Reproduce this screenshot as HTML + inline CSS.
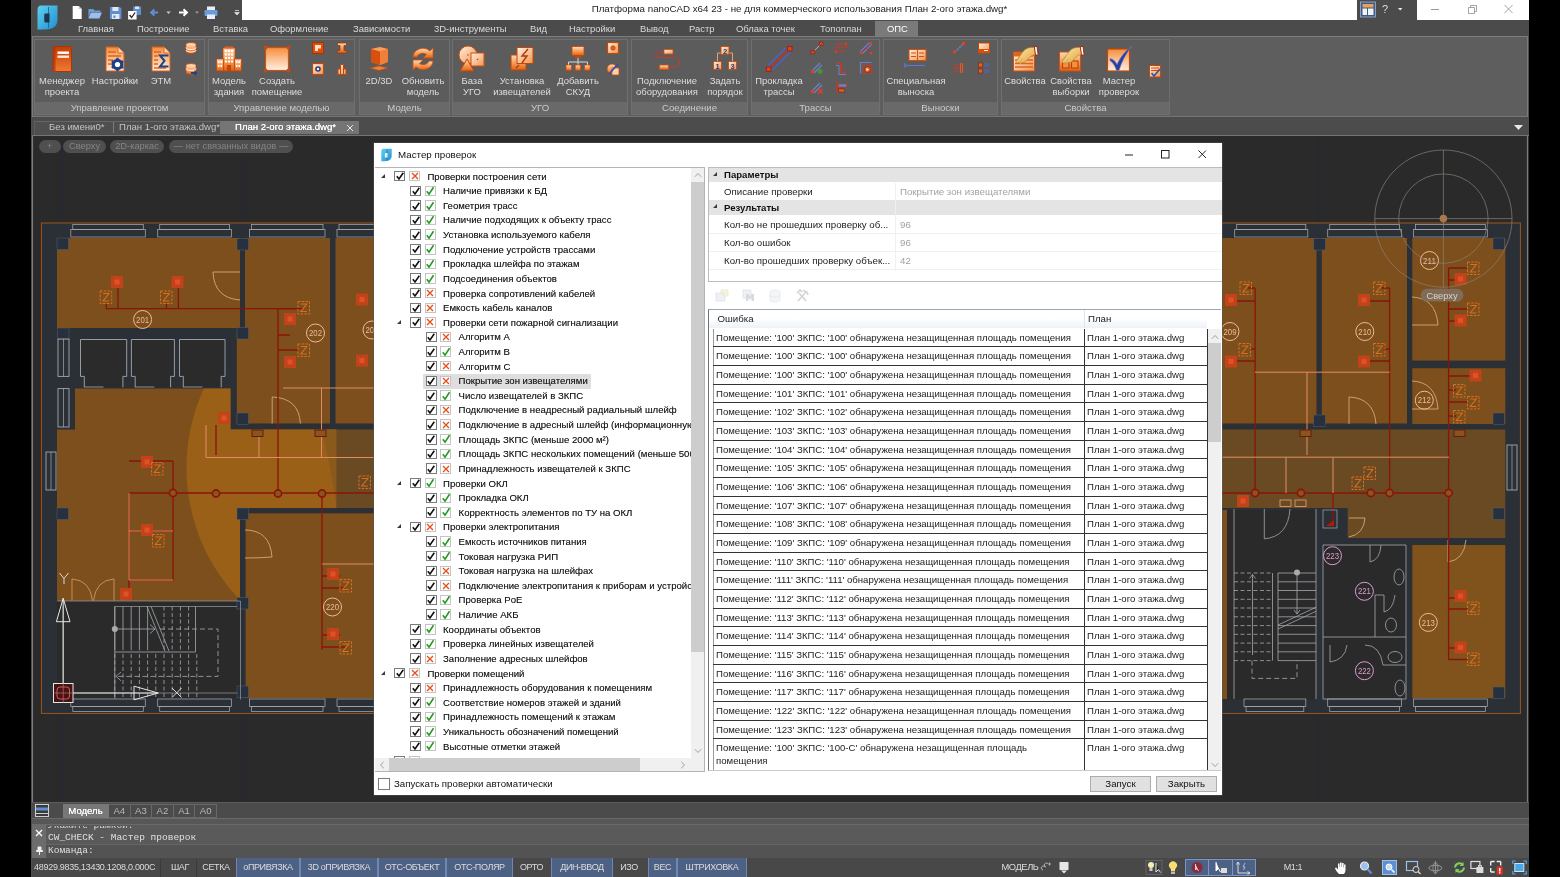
<!DOCTYPE html>
<html lang="ru"><head><meta charset="utf-8"><title>Платформа nanoCAD</title>
<style>
*{box-sizing:border-box;margin:0;padding:0}
html,body{width:1560px;height:877px;overflow:hidden;background:#000}
body{font-family:"Liberation Sans",sans-serif;font-size:9.7px;color:#222;position:relative}
.abs{position:absolute}
#app{will-change:transform;position:absolute;left:32px;top:0;width:1497px;height:877px;background:#4b4b4b;overflow:hidden;box-shadow:-1px 0 0 #505050}
.t{position:absolute;white-space:nowrap;line-height:12px}
/* title */
#titlew{position:absolute;left:210px;top:0;width:1115px;height:19.5px;background:#fff}
#titlew2{position:absolute;left:1385px;top:0;width:112px;height:19.5px;background:#fff}
#title{position:absolute;left:0;width:100%;top:2.6px;text-align:center;font-size:9.75px;color:#222;line-height:12px}
/* menu */
.mt{position:absolute;top:23.3px;font-size:9.45px;color:#dadada;line-height:12px;white-space:nowrap;}
#opstab{position:absolute;left:843px;top:21px;width:43px;height:17px;background:#7a7a7a}
/* ribbon */
#ribbon{position:absolute;left:0;top:36px;width:1496px;height:81px;background:#5e5e5e;border:1.5px solid #7c7c7c;border-bottom:1.5px solid #767676}
.grp{position:absolute;top:39px;height:76px;border:1px solid #6f6f6f;background:#5c5c5c}
.grp .gt{position:absolute;left:0;right:0;bottom:0;height:12.5px;background:#696969;color:#cacaca;text-align:center;font-size:9.6px;line-height:12px}
.bl{position:absolute;top:74.5px;transform:translateX(-50%);text-align:center;color:#dedede;font-size:9.45px;line-height:11px;white-space:nowrap}
.ic{position:absolute}
/* doc tabs */
#doctabs{position:absolute;left:0;top:119px;width:1497px;height:17px;background:#4c4c4c}
.dt{position:absolute;top:2px;height:13px;font-size:9.6px;line-height:12px;color:#c4c4c4;white-space:nowrap}
/* drawing */
#draw{position:absolute;left:0;top:136px;width:1497px;height:666px;background:#2a2a2a;overflow:hidden}
.pill{position:absolute;top:4px;height:13px;border-radius:6.5px;background:#4f4f4f;color:#858585;font-size:9.3px;line-height:13px;text-align:center;white-space:nowrap}
/* bottom */
#laytabs{position:absolute;left:0;top:802px;width:1497px;height:17px;background:#4b4b4b;border-top:1px solid #5c5c5c;border-bottom:1.5px solid #6a6a6a}
.lt{position:absolute;top:0.5px;height:14.5px;border:1px solid #686868;border-left:none;color:#b8b8b8;font-size:9.6px;line-height:12.5px;text-align:center}
#cmd{position:absolute;left:0;top:819px;width:1497px;height:39px;background:#575757}
.mono{font-family:"Liberation Mono",monospace}
#status{position:absolute;left:0;top:858px;width:1497px;height:19px;background:#484848}
.sb{position:absolute;top:0;height:19px;font-size:9px;line-height:19.5px;color:#dcdcdc;text-align:center;white-space:nowrap;letter-spacing:-.38px}
.sb.on{background:#4d6185;border:1px solid #6f86b0;border-top:none;border-bottom:none;line-height:19px}
/* dialog */
#dlg{position:absolute;left:342px;top:143px;width:848px;height:652px;background:#fff;box-shadow:0 0 0 .5px #555}
.row{position:absolute;height:14.6px;white-space:nowrap;font-size:9.6px;line-height:14.6px;color:#161616;text-shadow:0 0 .3px rgba(0,0,0,.45)}
.cb{position:absolute;width:11px;height:10.5px;border:1px solid #7a7a7a;background:#fff;top:1.4px}
.rs{position:absolute;width:11px;height:10.5px;border:1px solid #c4c4c4;background:#fff;top:1.4px}
.cb svg,.rs svg{position:absolute;left:-.5px;top:-.7px;width:10px;height:10px}
.tri{position:absolute;width:0;height:0;border-left:4.5px solid transparent;border-bottom:4.5px solid #3a3a3a;top:4px}
</style></head><body>
<svg width="0" height="0" style="position:absolute"><defs>
<linearGradient id="go" x1="0" y1="0" x2="0" y2="1"><stop offset="0" stop-color="#ffd9b8"/><stop offset=".55" stop-color="#f59a55"/><stop offset="1" stop-color="#e25f14"/></linearGradient>
<linearGradient id="gr" x1="0" y1="0" x2="0" y2="1"><stop offset="0" stop-color="#c23c08"/><stop offset="1" stop-color="#f07a30"/></linearGradient>
<linearGradient id="gpg" x1="0" y1="0" x2="0" y2="1"><stop offset="0" stop-color="#f58c3c"/><stop offset=".5" stop-color="#fbc090"/><stop offset="1" stop-color="#fff0e4"/></linearGradient>
<linearGradient id="gp" x1="0" y1="0" x2="1" y2="1"><stop offset="0" stop-color="#fff0e0"/><stop offset="1" stop-color="#f49450"/></linearGradient>
<linearGradient id="gh" x1="0" y1="0" x2="1" y2="1"><stop offset="0" stop-color="#ffe9a8"/><stop offset="1" stop-color="#e0a040"/></linearGradient>
<symbol id="i-book" viewBox="0 0 30 30"><rect x="6" y="2.500" width="18.500" height="25" rx="1.200" fill="url(#gr)" stroke="#a83408" stroke-width="1"/><rect x="6" y="2.500" width="2.500" height="25" fill="#b63606" opacity=".8"/><rect x="10.500" y="7.500" width="11.500" height="2.400" fill="#fff"/><rect x="10.500" y="11.500" width="11.500" height="2.400" fill="#ffe6d6"/></symbol>
<symbol id="i-docgear" viewBox="0 0 30 30"><path d="M6 3h12l6 6v18H6z" fill="url(#gpg)" stroke="#d55a14" stroke-width="1"/><path d="M18 3v6h6" fill="#ffd0a8" stroke="#d55a14" stroke-width=".8"/><path d="M8 8h8M8 12h13M8 16h5M8 20h4" stroke="#e0641c" stroke-width="1.600"/><circle cx="17.500" cy="20.500" r="5.800" fill="#1f3f86"/><circle cx="17.500" cy="20.500" r="2.600" fill="#fff"/><path d="M17.500 13.800v13.400M11.700 17.200l11.600 6.600M11.700 23.800l11.600-6.600" stroke="#1f3f86" stroke-width="2.200"/><circle cx="17.500" cy="20.500" r="2.600" fill="#fff"/></symbol>
<symbol id="i-docsum" viewBox="0 0 30 30"><path d="M6 3h12l6 6v18H6z" fill="url(#gpg)" stroke="#d55a14" stroke-width="1"/><path d="M18 3v6h6" fill="#ffd0a8" stroke="#d55a14" stroke-width=".8"/><path d="M8 8h7M8 12h4M8 16h4M8 20h4M8 24h12" stroke="#e0641c" stroke-width="1.600"/><path d="M22.500 11.500h-8.500l4.500 5.300-4.500 5.700h8.500" fill="none" stroke="#1f3f86" stroke-width="2"/></symbol>
<symbol id="i-bld" viewBox="0 0 30 30"><rect x="9" y="4" width="12" height="23" fill="url(#go)" stroke="#c04808" stroke-width=".8"/><rect x="2.500" y="15" width="7" height="12" fill="url(#go)" stroke="#c04808" stroke-width=".8"/><rect x="20.500" y="15" width="7" height="12" fill="url(#go)" stroke="#c04808" stroke-width=".8"/><path d="M11 7h8M11 10.500h8M11 14h8M11 17.500h8" stroke="#fff" stroke-width="1.800" stroke-dasharray="2 1"/><path d="M4 18h4M4 22h4M22 18h4M22 22h4" stroke="#fff" stroke-width="1.800" stroke-dasharray="1.500 1"/><rect x="13" y="21" width="4" height="6" fill="#c04808"/><rect x="10.500" y="2.500" width="9" height="2" fill="#e0641c"/></symbol>
<symbol id="i-room" viewBox="0 0 30 30"><rect x="3.500" y="3.500" width="23" height="23" fill="url(#gpg)" stroke="#d0500c" stroke-width="1.200"/><circle cx="3.500" cy="3.500" r="2" fill="#c84810"/><circle cx="26.500" cy="3.500" r="2" fill="#c84810"/><circle cx="3.500" cy="26.500" r="2" fill="#c84810"/><circle cx="26.500" cy="26.500" r="2" fill="#c84810"/></symbol>
<symbol id="i-cube" viewBox="0 0 30 30"><path d="M7 5l9-2 8 2v13l-8 3-9-3z" fill="url(#gr)"/><path d="M7 5l9 2.500V21l-9-3z" fill="#d8500e"/><path d="M16 7.500L24 5v13l-8 3z" fill="#f08038"/><path d="M7 5l9-2 8 2-8 2.500z" fill="#f9a060"/><path d="M6 24l9-2 9 2-9 2.500z" fill="#f08038" stroke="#c04808" stroke-width=".6"/></symbol>
<symbol id="i-refresh" viewBox="0 0 30 30"><path d="M5 13a10 9 0 0 1 17-6l3-3v10h-10l3.500-3.500a6 5.500 0 0 0-9.500 2.500z" fill="url(#go)" stroke="#c85010" stroke-width=".8"/><path d="M25 17a10 9 0 0 1-17 6l-3 3V16h10l-3.500 3.500a6 5.500 0 0 0 9.500-2.500z" fill="url(#go)" stroke="#c85010" stroke-width=".8"/></symbol>
<symbol id="i-shapes" viewBox="0 0 30 30"><circle cx="11" cy="11" r="9" fill="url(#gp)" stroke="#d0500c" stroke-width="1"/><rect x="14" y="9" width="13" height="13" fill="url(#gp)" stroke="#d0500c" stroke-width="1"/><path d="M3 27l7-12 7 12z" fill="url(#go)" stroke="#c04808" stroke-width="1"/><circle cx="11" cy="11" r=".8" fill="#c04808"/><circle cx="20.500" cy="15.500" r=".8" fill="#c04808"/></symbol>
<symbol id="i-bolt" viewBox="0 0 30 30"><rect x="4" y="11" width="15" height="15" fill="url(#go)" stroke="#c04808" stroke-width="1"/><rect x="10" y="3.500" width="16" height="16" fill="url(#gp)" stroke="#c04808" stroke-width="1"/><path d="M21 5l-6 7h5l-5 7" fill="none" stroke="#b03a04" stroke-width="1.400"/><path d="M12 21l-3 3" stroke="#b03a04" stroke-width="1.200"/></symbol>
<symbol id="i-net" viewBox="0 0 30 30"><rect x="9" y="2.500" width="12" height="9" fill="url(#go)" stroke="#c04808" stroke-width=".8"/><rect x="12" y="12" width="6" height="1.800" fill="#c84810"/><path d="M15 14v4M5.500 22v-4h19v4M15 18v4" stroke="#d8d8d8" stroke-width="1" fill="none"/><rect x="3" y="21" width="5.500" height="5.500" fill="url(#go)" stroke="#c04808" stroke-width=".7"/><rect x="12.200" y="21" width="5.500" height="5.500" fill="url(#go)" stroke="#c04808" stroke-width=".7"/><rect x="21.500" y="21" width="5.500" height="5.500" fill="url(#go)" stroke="#c04808" stroke-width=".7"/></symbol>
<symbol id="i-conn" viewBox="0 0 30 30"><path d="M12 8H6.500a2.500 2.500 0 0 0 0 5.500H23a3 3 0 0 1 0 9.500h-5" fill="none" stroke="#c43a2a" stroke-width="1.100"/><rect x="12" y="5.500" width="9" height="4.500" fill="url(#gp)" stroke="#d0500c" stroke-width=".8"/><rect x="7.500" y="21" width="9" height="4.500" fill="url(#go)" stroke="#d0500c" stroke-width=".8"/></symbol>
<symbol id="i-order" viewBox="0 0 30 30"><path d="M7.500 18v-9h15v9" fill="none" stroke="#e0a080" stroke-width="1"/><rect x="11" y="2.500" width="8" height="8" fill="url(#gp)" stroke="#c04808" stroke-width=".8"/><rect x="3.500" y="17.500" width="8" height="8" fill="url(#gp)" stroke="#c04808" stroke-width=".8"/><rect x="18.500" y="17.500" width="8" height="8" fill="url(#gp)" stroke="#c04808" stroke-width=".8"/><text x="15" y="9.500" font-size="7.500" font-weight="bold" text-anchor="middle" fill="#1f3f86" font-family="Liberation Sans,sans-serif">2</text><text x="7.500" y="24.500" font-size="7.500" font-weight="bold" text-anchor="middle" fill="#1f3f86" font-family="Liberation Sans,sans-serif">1</text><text x="22.500" y="24.500" font-size="7.500" font-weight="bold" text-anchor="middle" fill="#1f3f86" font-family="Liberation Sans,sans-serif">3</text></symbol>
<symbol id="i-trace" viewBox="0 0 30 30"><path d="M4 21.500L21.500 4M8.500 26L26 8.500" stroke="#4866c8" stroke-width="1.400"/><path d="M6 24L24 6" stroke="#c8301c" stroke-width="1.500"/><rect x="2.500" y="23" width="4.500" height="4.500" fill="#e04020" stroke="#901c08" stroke-width=".7"/><rect x="23.500" y="2.500" width="4.500" height="4.500" fill="#e04020" stroke="#901c08" stroke-width=".7"/></symbol>
<symbol id="i-callout" viewBox="0 0 30 30"><rect x="8" y="5.500" width="17" height="11" fill="url(#gp)" stroke="#d0500c" stroke-width="1"/><path d="M16.500 5.500v11M10 9h5M10 12.500h5M18 9h5M18 12.500h5" stroke="#d0500c" stroke-width="1.100"/><path d="M5 21.500h19" stroke="#5a78d0" stroke-width="1.100"/><path d="M3.500 19.500l3 2-3 2z" fill="none" stroke="#5a78d0" stroke-width=".9"/></symbol>
<symbol id="i-props" viewBox="0 0 30 30"><rect x="3.500" y="8" width="21" height="19" fill="url(#gp)" stroke="#d0500c" stroke-width="1"/><rect x="3.500" y="8" width="21" height="4.500" fill="#e0641c"/><path d="M5 16h18M5 19.500h18M5 23h18" stroke="#e0641c" stroke-width="1.300"/><path d="M24.500 3.500l1.500 7c-4 .5-6 2-8 4.500l-2.500 3c-1 1-2.500 1-3 0l-1 1c-1 1-2.600.5-2.800-.8l-.8.500c-1.200.6-2.400-.5-1.800-1.800L14 6.500c2.500-2.500 6-3.500 10.500-3z" fill="url(#gh)" stroke="#b8862c" stroke-width=".7"/><path d="M10 12.500l-3.200 4.400M12.500 14.500l-2.800 4.300M15 16.500l-2.500 2.500" stroke="#c89838" stroke-width=".7" fill="none"/><path d="M24.300 2.500h2.700l1.200 8.500h-2.700z" fill="#fff" stroke="#a82810" stroke-width="1"/></symbol>
<symbol id="i-props2" viewBox="0 0 30 30"><rect x="3.500" y="8" width="21" height="19" fill="url(#go)" stroke="#d0500c" stroke-width="1"/><rect x="6.500" y="17" width="6.500" height="7" fill="#f59040" stroke="#b84008" stroke-width="1.100"/><rect x="15.500" y="17" width="6.500" height="7" fill="#f59040" stroke="#b84008" stroke-width="1.100"/><path d="M24.500 3.500l1.500 7c-4 .5-6 2-8 4.500l-2.500 3c-1 1-2.500 1-3 0l-1 1c-1 1-2.600.5-2.800-.8l-.8.500c-1.200.6-2.400-.5-1.800-1.800L14 6.500c2.500-2.500 6-3.500 10.500-3z" fill="url(#gh)" stroke="#b8862c" stroke-width=".7"/><path d="M10 12.500l-3.200 4.400M12.500 14.500l-2.800 4.300M15 16.500l-2.500 2.500" stroke="#c89838" stroke-width=".7" fill="none"/><path d="M24.300 2.500h2.700l1.200 8.500h-2.700z" fill="#fff" stroke="#a82810" stroke-width="1"/></symbol>
<symbol id="i-check" viewBox="0 0 30 30"><rect x="3.500" y="5" width="22" height="22" fill="url(#gpg)" stroke="#c04808" stroke-width="1.200"/><path d="M6 14.500c3 .5 5.500 2.500 7 6C16.500 13 21.500 6.500 27.500 2.500 22 9.500 17.500 18 15 26.500h-2.500c-1.500-4.500-3.500-8-6.500-10z" fill="#2a3f9c" stroke="#6a80d0" stroke-width=".6"/></symbol>
<symbol id="s-db" viewBox="0 0 14 14"><ellipse cx="7" cy="3.500" rx="5" ry="2" fill="#ffd0a8" stroke="#c84810" stroke-width=".8"/><path d="M2 3.500v7c0 1.200 2.200 2 5 2s5-.8 5-2v-7" fill="url(#go)" stroke="#c84810" stroke-width=".8"/><path d="M2 6.500c0 1.200 2.200 2 5 2s5-.8 5-2M2 9c0 1.200 2.200 2 5 2s5-.8 5-2" fill="none" stroke="#fff" stroke-width=".9"/></symbol>
<symbol id="s-db2" viewBox="0 0 14 14"><ellipse cx="7" cy="3.500" rx="5" ry="2" fill="#ffd0a8" stroke="#c84810" stroke-width=".8"/><path d="M2 3.500v7c0 1.200 2.200 2 5 2s5-.8 5-2v-7" fill="url(#go)" stroke="#c84810" stroke-width=".8"/><path d="M2 6.500c0 1.200 2.200 2 5 2s5-.8 5-2" fill="none" stroke="#fff" stroke-width=".9"/><path d="M7 10h3.500V8.300l3 2.700-3 2.700V12H7z" fill="#1f3f86"/></symbol>
<symbol id="s-s1" viewBox="0 0 14 14"><rect x="1.500" y="1.500" width="11" height="11" fill="#d8500e" stroke="#a83404" stroke-width="1"/><path d="M4 4h6v3.500H7V10H4z" fill="#ffe0c8"/></symbol>
<symbol id="s-s2" viewBox="0 0 14 14"><path d="M2.500 2h9v2.500H9v5h2.500V12h-9V9.500H5v-5H2.500z" fill="url(#go)" stroke="#a83404" stroke-width=".8"/></symbol>
<symbol id="s-s3" viewBox="0 0 14 14"><rect x="1.500" y="1.500" width="11" height="11" fill="url(#gp)" stroke="#c04808" stroke-width="1.200"/><circle cx="7" cy="7" r="2.800" fill="#1f3f86"/><circle cx="7" cy="7" r="1.200" fill="#fff"/></symbol>
<symbol id="s-s4" viewBox="0 0 14 14"><path d="M1.500 12.500h11M3 12.500V7h2.500v5.500M8.500 12.500V7H11v5.500M5.500 12.500V2.500h3v10" fill="url(#gp)" stroke="#c04808" stroke-width="1"/></symbol>
<symbol id="s-s5" viewBox="0 0 14 14"><rect x="1.500" y="1.500" width="11" height="11" fill="url(#gp)" stroke="#c04808" stroke-width="1.200"/><circle cx="7" cy="7" r="2.200" fill="#e0641c" stroke="#a83404" stroke-width=".6"/></symbol>
<symbol id="s-s6" viewBox="0 0 14 14"><circle cx="6" cy="7" r="5" fill="url(#go)" stroke="#c04808" stroke-width=".8"/><rect x="6" y="6" width="7" height="7" fill="#ffd0a8" stroke="#c04808" stroke-width=".7"/><path d="M3 12L12 2" stroke="#2f4fb0" stroke-width="1.800"/></symbol>
<symbol id="s-t1" viewBox="0 0 14 14"><path d="M3 11L11 3" stroke="#d8a090" stroke-width="1"/><rect x="1" y="9.500" width="3.500" height="3.500" fill="#e04020" stroke="#901c08" stroke-width=".6"/><rect x="9.500" y="1" width="3.500" height="3.500" fill="#e04020" stroke="#901c08" stroke-width=".6"/></symbol>
<symbol id="s-t2" viewBox="0 0 14 14"><path d="M2 3h9M3 6.500h9M2 10h9" stroke="#c43a2a" stroke-width="1.300" stroke-dasharray="2.500 1"/><circle cx="12" cy="2.500" r="1.200" fill="#e04020"/><circle cx="2" cy="11" r="1.200" fill="#e04020"/><path d="M11 3a1.700 1.700 0 0 1 0 3.500M3 6.500a1.700 1.700 0 0 0 0 3.500" fill="none" stroke="#c43a2a" stroke-width="1"/></symbol>
<symbol id="s-t3" viewBox="0 0 14 14"><path d="M1.500 10.500L10.500 1.500M3.500 12.500l9-9" stroke="#6a80c8" stroke-width="1.100"/><path d="M2.500 11.500L11.500 2.500M7 7l5 5" stroke="#b8302a" stroke-width="1"/><circle cx="12" cy="2" r="1.300" fill="#e04020"/><circle cx="2" cy="12" r="1.300" fill="#e04020"/><circle cx="12" cy="12" r="1.300" fill="#e04020"/></symbol>
<symbol id="s-t4" viewBox="0 0 14 14"><path d="M2 10L10 2M4 12l8-8" stroke="#6a80c8" stroke-width="1.300"/><circle cx="10" cy="10.500" r="2.500" fill="#3a9a3a"/><rect x="1" y="9" width="3" height="3" fill="#e04020"/></symbol>
<symbol id="s-t5" viewBox="0 0 14 14"><path d="M2 2.500h5v9h5" fill="none" stroke="#c43a2a" stroke-width="1.500"/><path d="M2 4.500h3v9h7" fill="none" stroke="#6a80c8" stroke-width="1"/></symbol>
<symbol id="s-t6" viewBox="0 0 14 14"><path d="M1.500 12.500v-11h11" fill="none" stroke="#6a80c8" stroke-width="1.200"/><rect x="4" y="4" width="8.500" height="8.500" fill="none" stroke="#c43a2a" stroke-width="1"/><circle cx="8.500" cy="8.500" r="3" fill="#e0641c" stroke="#901c08" stroke-width=".6"/><path d="M7.500 7l2.500 1.500L7.500 10z" fill="#fff"/></symbol>
<symbol id="s-t7" viewBox="0 0 14 14"><path d="M2 10L10 2M4 12l8-8" stroke="#6a80c8" stroke-width="1.300"/><path d="M8 8l4.500 4.500M12.500 8L8 12.500" stroke="#e04020" stroke-width="1.600"/><rect x="1" y="9" width="3" height="3" fill="#e04020"/></symbol>
<symbol id="s-t8" viewBox="0 0 14 14"><path d="M3 1.500v11" stroke="#c43a2a" stroke-width="1.600"/><rect x="4.500" y="3" width="8" height="3" fill="#6a80c8" stroke="#c43a2a" stroke-width=".6"/><rect x="4.500" y="8" width="6" height="3" fill="#e0641c" stroke="#901c08" stroke-width=".6"/></symbol>
<symbol id="s-c1" viewBox="0 0 14 14"><path d="M3 11L11 3" stroke="#6a80c8" stroke-width="1.600" stroke-dasharray="2 1"/><rect x="1" y="9.500" width="3" height="3" fill="#e04020"/><rect x="10" y="1" width="3" height="3" fill="#e04020"/></symbol>
<symbol id="s-c2" viewBox="0 0 14 14"><rect x="1.500" y="2" width="11" height="10" fill="url(#gp)" stroke="#c04808" stroke-width="1"/><rect x="1.500" y="8" width="11" height="4" fill="#d8500e"/><path d="M7 9.500h4" stroke="#fff" stroke-width="1"/></symbol>
<symbol id="s-c3" viewBox="0 0 14 14"><path d="M1 4h9M1 7h12M1 10h9" stroke="#c43a2a" stroke-width="1"/><path d="M8.500 2v10M10.500 2v10" stroke="#e0641c" stroke-width=".9"/></symbol>
<symbol id="s-c4" viewBox="0 0 14 14"><rect x="1.500" y="2" width="4" height="4" fill="#e0641c" stroke="#901c08" stroke-width=".6"/><rect x="1.500" y="8" width="4" height="4" fill="#e0641c" stroke="#901c08" stroke-width=".6"/><path d="M7 3h5.500M7 5h5.500M7 9h5.500M7 11h5.500" stroke="#4a68c8" stroke-width="1.200"/></symbol>
<symbol id="s-p1" viewBox="0 0 14 14"><rect x="1.500" y="1.500" width="11" height="11.500" fill="url(#gp)" stroke="#c04808" stroke-width="1"/><path d="M3 4h8M3 6.500h8" stroke="#d8500e" stroke-width="1.200"/><path d="M3.500 9l2.500 3 6-7" fill="none" stroke="#2f4fb0" stroke-width="1.600"/></symbol>
</defs></svg>
<div id="app">
<div id="titlew"><div id="title">Платформа nanoCAD x64 23 - не для коммерческого использования План 2-ого этажа.dwg*</div></div>
<div id="titlew2"></div>
<svg class="abs" style="left:4px;top:4px" width="23" height="27" viewBox="0 0 23 27"><defs><linearGradient id="lg" x1="0" y1="0" x2="1" y2="1"><stop offset="0" stop-color="#5fd0f0"/><stop offset="1" stop-color="#1f8fd0"/></linearGradient></defs><path d="M5 1.5H21.5V15Q21.5 25.5 9 25.5H1.5V6Q1.5 1.5 5 1.5Z" fill="url(#lg)"/><path d="M12.5 3V24" stroke="#1a6fa8" stroke-width="1"/><path d="M9.5 9.5h4v9h-4a1.2 1.2 0 0 1-1.2-1.2v-6.6a1.2 1.2 0 0 1 1.2-1.2z" fill="#1d3550"/></svg>
<svg class="abs" style="left:36px;top:2.500px" width="174" height="19" viewBox="-12 0 174 19">
<g transform="translate(-11.800)"><path d="M4.500 3h6l3 3v10h-9z" fill="#fff"/><path d="M10.500 3v3h3" fill="#ccc"/></g>
<g transform="translate(-13.600)"><path d="M22 6h5l1 1.500h6V9H24l-2 6z" fill="#6b9bd8"/><path d="M24.500 9.500h11l-2.500 6H22z" fill="#9cc0ee"/></g>
<g transform="translate(-13.100)"><path d="M43 4h10l1.500 1.500V16H43z" fill="#5f8fd0"/><rect x="45.500" y="4" width="6" height="4" fill="#dfe9f8"/><rect x="45" y="11" width="7.500" height="5" fill="#dfe9f8"/><rect x="46.500" y="12.500" width="2" height="2.500" fill="#5f8fd0"/></g>
<g transform="translate(-12.900)"><path d="M66 3.500h7l1 1V12h-8z" fill="#5f8fd0"/><rect x="68" y="3.500" width="4" height="2.500" fill="#dfe9f8"/><rect x="61" y="8" width="8.500" height="8.500" fill="#fff"/><path d="M62.500 12l2 2.500 3.500-5" stroke="#222" stroke-width="1.300" fill="none"/></g>
<g transform="translate(-10.400)"><path d="M88.500 9.500H82M84.800 6.500l-3.200 3 3.200 3" stroke="#5f8fd0" stroke-width="2" fill="none"/></g>
<g transform="translate(-7.200)"><path d="M93.500 8.500h4.500l-2.250 2.500z" fill="#c8c8c8"/></g>
<g transform="translate(-4)"><path d="M103 9.500h7.500M107.500 6.300l3.400 3.200-3.400 3.200" stroke="#fff" stroke-width="2" fill="none"/></g>
<g transform="translate(-1)"><path d="M116 8.500h4l-2 2.300z" fill="#9a9a9a"/></g>
<rect x="127" y="3.500" width="8" height="4" fill="#e8eef8"/><rect x="124.500" y="7" width="13" height="6" rx="1" fill="#6b9bd8"/><rect x="127" y="11.500" width="8" height="4.500" fill="#e8eef8"/>
<g transform="translate(3.500)"><path d="M151.500 7.500h4M151.200 9.500h4.600l-2.300 2.500z" stroke="#ddd" stroke-width=".8" fill="#ddd"/></g>
</svg>
<svg class="abs" style="left:1325px;top:0" width="60" height="19.500" viewBox="0 0 60 19.500"><rect x="3.500" y="2" width="15" height="15" fill="#3f5a85" stroke="#9fb4d8" stroke-width=".8"/><rect x="5.500" y="4" width="11" height="3.500" fill="#e8a060"/><rect x="5.500" y="8.500" width="4.500" height="6.500" fill="#f2f2f2"/><rect x="11" y="8.500" width="5.500" height="6.500" fill="#f2f2f2"/><path d="M41 8h4.400l-2.200 2.400z" fill="#eee"/></svg>
<div class="t" style="left:1350px;top:3px;font-size:11px;color:#ddd">?</div>
<svg class="abs" style="left:1385px;top:0" width="112" height="19.500" viewBox="0 0 112 19.500"><path d="M14 9.500h8" stroke="#999" stroke-width="1"/><path d="M51.500 7.500h6v6h-6zM53.500 7.500V5.500h6v6h-2" fill="none" stroke="#999" stroke-width=".9"/><path d="M87.500 5l8 8M95.500 5l-8 8" stroke="#999" stroke-width=".9"/></svg>
<div id="opstab"></div>
<div class="mt" style="left:46px">Главная</div>
<div class="mt" style="left:105px">Построение</div>
<div class="mt" style="left:181px">Вставка</div>
<div class="mt" style="left:238px">Оформление</div>
<div class="mt" style="left:321px">Зависимости</div>
<div class="mt" style="left:402px">3D-инструменты</div>
<div class="mt" style="left:498px">Вид</div>
<div class="mt" style="left:537px">Настройки</div>
<div class="mt" style="left:608px">Вывод</div>
<div class="mt" style="left:657px">Растр</div>
<div class="mt" style="left:704px">Облака точек</div>
<div class="mt" style="left:788px">Топоплан</div>
<div class="mt" style="left:855px;color:#fff">ОПС</div>
<div id="ribbon"></div>
<div class="grp" style="left:2px;width:171px"><div class="gt">Управление проектом</div></div>
<div class="grp" style="left:176px;width:147px"><div class="gt">Управление моделью</div></div>
<div class="grp" style="left:327px;width:91px"><div class="gt">Модель</div></div>
<div class="grp" style="left:420px;width:176px"><div class="gt">УГО</div></div>
<div class="grp" style="left:599px;width:117px"><div class="gt">Соединение</div></div>
<div class="grp" style="left:719px;width:129px"><div class="gt">Трассы</div></div>
<div class="grp" style="left:851px;width:115px"><div class="gt">Выноски</div></div>
<div class="grp" style="left:969px;width:169px"><div class="gt">Свойства</div></div>
<div class="bl" style="left:30px">Менеджер<br>проекта</div>
<svg class="ic" style="left:15px;top:44px" width="30" height="30"><use href="#i-book"/></svg>
<div class="bl" style="left:83px">Настройки</div>
<svg class="ic" style="left:68px;top:44px" width="30" height="30"><use href="#i-docgear"/></svg>
<div class="bl" style="left:129px">ЭТМ</div>
<svg class="ic" style="left:114px;top:44px" width="30" height="30"><use href="#i-docsum"/></svg>
<div class="bl" style="left:197px">Модель<br>здания</div>
<svg class="ic" style="left:182px;top:44px" width="30" height="30"><use href="#i-bld"/></svg>
<div class="bl" style="left:245px">Создать<br>помещение</div>
<svg class="ic" style="left:230px;top:44px" width="30" height="30"><use href="#i-room"/></svg>
<div class="bl" style="left:347px">2D/3D</div>
<svg class="ic" style="left:332px;top:44px" width="30" height="30"><use href="#i-cube"/></svg>
<div class="bl" style="left:391px">Обновить<br>модель</div>
<svg class="ic" style="left:376px;top:44px" width="30" height="30"><use href="#i-refresh"/></svg>
<div class="bl" style="left:440px">База<br>УГО</div>
<svg class="ic" style="left:425px;top:44px" width="30" height="30"><use href="#i-shapes"/></svg>
<div class="bl" style="left:490px">Установка<br>извещателей</div>
<svg class="ic" style="left:475px;top:44px" width="30" height="30"><use href="#i-bolt"/></svg>
<div class="bl" style="left:546px">Добавить<br>СКУД</div>
<svg class="ic" style="left:531px;top:44px" width="30" height="30"><use href="#i-net"/></svg>
<div class="bl" style="left:635px">Подключение<br>оборудования</div>
<svg class="ic" style="left:620px;top:44px" width="30" height="30"><use href="#i-conn"/></svg>
<div class="bl" style="left:693px">Задать<br>порядок</div>
<svg class="ic" style="left:678px;top:44px" width="30" height="30"><use href="#i-order"/></svg>
<div class="bl" style="left:747px">Прокладка<br>трассы</div>
<svg class="ic" style="left:732px;top:44px" width="30" height="30"><use href="#i-trace"/></svg>
<div class="bl" style="left:884px">Специальная<br>выноска</div>
<svg class="ic" style="left:869px;top:44px" width="30" height="30"><use href="#i-callout"/></svg>
<div class="bl" style="left:993px">Свойства</div>
<svg class="ic" style="left:978px;top:44px" width="30" height="30"><use href="#i-props"/></svg>
<div class="bl" style="left:1039px">Свойства<br>выборки</div>
<svg class="ic" style="left:1024px;top:44px" width="30" height="30"><use href="#i-props2"/></svg>
<div class="bl" style="left:1087px">Мастер<br>проверок</div>
<svg class="ic" style="left:1072px;top:44px" width="30" height="30"><use href="#i-check"/></svg>
<svg class="ic" style="left:152px;top:41px" width="14" height="14"><use href="#s-db"/></svg>
<svg class="ic" style="left:152px;top:62px" width="14" height="14"><use href="#s-db2"/></svg>
<svg class="ic" style="left:279px;top:41px" width="14" height="14"><use href="#s-s1"/></svg>
<svg class="ic" style="left:303px;top:41px" width="14" height="14"><use href="#s-s2"/></svg>
<svg class="ic" style="left:279px;top:62px" width="14" height="14"><use href="#s-s3"/></svg>
<svg class="ic" style="left:303px;top:62px" width="14" height="14"><use href="#s-s4"/></svg>
<svg class="ic" style="left:574px;top:41px" width="14" height="14"><use href="#s-s5"/></svg>
<svg class="ic" style="left:574px;top:62px" width="14" height="14"><use href="#s-s6"/></svg>
<svg class="ic" style="left:778px;top:41px" width="14" height="14"><use href="#s-t1"/></svg>
<svg class="ic" style="left:802px;top:41px" width="14" height="14"><use href="#s-t2"/></svg>
<svg class="ic" style="left:827px;top:41px" width="14" height="14"><use href="#s-t3"/></svg>
<svg class="ic" style="left:778px;top:61px" width="14" height="14"><use href="#s-t4"/></svg>
<svg class="ic" style="left:802px;top:61px" width="14" height="14"><use href="#s-t5"/></svg>
<svg class="ic" style="left:827px;top:61px" width="14" height="14"><use href="#s-t6"/></svg>
<svg class="ic" style="left:778px;top:81px" width="14" height="14"><use href="#s-t7"/></svg>
<svg class="ic" style="left:802px;top:81px" width="14" height="14"><use href="#s-t8"/></svg>
<svg class="ic" style="left:920px;top:41px" width="14" height="14"><use href="#s-c1"/></svg>
<svg class="ic" style="left:945px;top:41px" width="14" height="14"><use href="#s-c2"/></svg>
<svg class="ic" style="left:920px;top:61px" width="14" height="14"><use href="#s-c3"/></svg>
<svg class="ic" style="left:945px;top:61px" width="14" height="14"><use href="#s-c4"/></svg>
<svg class="ic" style="left:1116px;top:64px" width="14" height="14"><use href="#s-p1"/></svg>
<div id="doctabs">
<div class="abs" style="left:0;top:15.500px;width:1497px;height:1.200px;background:#747474"></div>
<div class="abs" style="left:2px;top:1.500px;width:186px;height:14px;border-top:1px solid #666;border-left:1px solid #5c5c5c;background:#4f4f4f"></div>
<div class="abs" style="left:81px;top:2.5px;width:1px;height:11.500px;background:#7a7a7a"></div>
<div class="abs" style="left:188px;top:2px;width:139px;height:13px;background:#757575"></div>
<div class="dt" style="left:17px">Без имени0*</div>
<div class="dt" style="left:87px">План 1-ого этажа.dwg*</div>
<div class="dt" style="left:203px;color:#fff;text-shadow:0 0 .5px #fff">План 2-ого этажа.dwg*</div>
<svg class="abs" style="left:314px;top:4.500px" width="8" height="8"><path d="M1 1l6 6M7 1l-6 6" stroke="#e8e8e8" stroke-width="1"/></svg>
<svg class="abs" style="left:1482px;top:5.500px" width="9" height="6"><path d="M0 0h9l-4.500 5z" fill="#e8e8e8"/></svg>
</div>
<div id="draw">
<svg class="abs" style="left:0;top:0" width="1497" height="666" viewBox="32 136 1497 666" font-family="Liberation Sans,sans-serif">
<path d="M62 136V802" stroke="#20283c" stroke-width="1"/>
<path d="M243 136V802" stroke="#20283c" stroke-width="1"/>
<path d="M532 136V802" stroke="#20283c" stroke-width="1"/>
<path d="M1317.7 136V802" stroke="#20283c" stroke-width="1"/>
<rect x="42" y="223.500" width="1478" height="489.500" fill="#2b2f36"/>
<rect x="57" y="238" width="183" height="90" fill="#7d4f1c"/>
<path d="M245 238H330V423.500H236.800V333H245Z" fill="#7d4f1c"/>
<rect x="335.5" y="238" width="84.5" height="185.5" fill="#7d4f1c"/>
<path id="hall" d="M75 388.600H230.500V429.500H337V508H240V601H57V429.500H75Z" fill="#7d4f1c"/>
<clipPath id="hc"><path d="M75 388.600H230.500V429.500H336V508H240V601H57V429.500H75Z"/></clipPath>
<g clip-path="url(#hc)"><circle cx="376.500" cy="468" r="190" fill="#9a6018"/><path d="M322 429.500Q331 470 337 508H345V429.500Z" fill="#8a5a1c"/></g>
<rect x="337" y="429.5" width="1168.3" height="78.5" fill="#6a4a22"/>
<rect x="245.6" y="513.3" width="174.4" height="184.9" fill="#7d4f1c"/>
<rect x="57" y="601" width="183" height="97.2" fill="#2a2a2a"/>
<rect x="1180" y="238" width="136.5" height="185.5" fill="#7d4f1c"/>
<rect x="1321.8" y="238" width="85.2" height="185.5" fill="#7d4f1c"/>
<rect x="1412.3" y="238" width="93" height="122.6" fill="#7d4f1c"/>
<rect x="1412.3" y="368.2" width="93" height="55.8" fill="#7d4f1c"/>
<rect x="1347.7" y="508" width="157.6" height="30" fill="#6a4a22"/>
<rect x="1222" y="510" width="93.7" height="189.4" fill="#2a2a2a"/>
<rect x="1323" y="545" width="83.3" height="154" fill="#2a2a2a"/>
<rect x="1412.3" y="545" width="93" height="153.2" fill="#80521c"/>
<rect x="1221" y="510" width="6" height="189" fill="#7d4f1c"/>
<rect x="41.400" y="223" width="1479" height="490.400" fill="none" stroke="#a0561c" stroke-width="1"/>
<rect x="57" y="238" width="11.500" height="11.500" fill="#27303e" stroke="#56606e" stroke-width=".5"/>
<rect x="57.5" y="328" width="11.500" height="11.500" fill="#27303e" stroke="#56606e" stroke-width=".5"/>
<rect x="237" y="238.5" width="11.500" height="11.500" fill="#27303e" stroke="#56606e" stroke-width=".5"/>
<rect x="57" y="508" width="11.500" height="11.500" fill="#27303e" stroke="#56606e" stroke-width=".5"/>
<rect x="237" y="327.5" width="11.500" height="11.500" fill="#27303e" stroke="#56606e" stroke-width=".5"/>
<rect x="237" y="413" width="11.500" height="11.500" fill="#27303e" stroke="#56606e" stroke-width=".5"/>
<rect x="237" y="508" width="11.500" height="11.500" fill="#27303e" stroke="#56606e" stroke-width=".5"/>
<rect x="237" y="597.5" width="11.500" height="11.500" fill="#27303e" stroke="#56606e" stroke-width=".5"/>
<rect x="237" y="686" width="11.500" height="11.500" fill="#27303e" stroke="#56606e" stroke-width=".5"/>
<rect x="1313.7" y="238.5" width="11.500" height="11.500" fill="#27303e" stroke="#56606e" stroke-width=".5"/>
<rect x="1493" y="238" width="11.500" height="11.500" fill="#27303e" stroke="#56606e" stroke-width=".5"/>
<rect x="1313.7" y="415" width="11.500" height="11.500" fill="#27303e" stroke="#56606e" stroke-width=".5"/>
<rect x="1493" y="413" width="11.500" height="11.500" fill="#27303e" stroke="#56606e" stroke-width=".5"/>
<rect x="1493" y="508" width="11.500" height="11.500" fill="#27303e" stroke="#56606e" stroke-width=".5"/>
<rect x="1493" y="687" width="11.500" height="11.500" fill="#27303e" stroke="#56606e" stroke-width=".5"/>
<rect x="72.8" y="224.5" width="70.5" height="5" fill="none" stroke="#a4a9af" stroke-width=".75"/>
<rect x="70.8" y="229.5" width="74.5" height="7.500" fill="none" stroke="#a4a9af" stroke-width=".75"/>
<rect x="159.7" y="224.5" width="69.8" height="5" fill="none" stroke="#a4a9af" stroke-width=".75"/>
<rect x="157.7" y="229.5" width="73.8" height="7.500" fill="none" stroke="#a4a9af" stroke-width=".75"/>
<rect x="251.5" y="224.5" width="71.5" height="5" fill="none" stroke="#a4a9af" stroke-width=".75"/>
<rect x="249.5" y="229.5" width="75.5" height="7.500" fill="none" stroke="#a4a9af" stroke-width=".75"/>
<rect x="339" y="224.5" width="79" height="5" fill="none" stroke="#a4a9af" stroke-width=".75"/>
<rect x="337" y="229.5" width="83" height="7.500" fill="none" stroke="#a4a9af" stroke-width=".75"/>
<rect x="1236.7" y="224.5" width="69.1" height="5" fill="none" stroke="#a4a9af" stroke-width=".75"/>
<rect x="1234.7" y="229.5" width="73.1" height="7.500" fill="none" stroke="#a4a9af" stroke-width=".75"/>
<rect x="1329.7" y="224.5" width="69.8" height="5" fill="none" stroke="#a4a9af" stroke-width=".75"/>
<rect x="1327.7" y="229.5" width="73.8" height="7.500" fill="none" stroke="#a4a9af" stroke-width=".75"/>
<rect x="1415.5" y="224.5" width="69.8" height="5" fill="none" stroke="#a4a9af" stroke-width=".75"/>
<rect x="1413.5" y="229.5" width="73.8" height="7.500" fill="none" stroke="#a4a9af" stroke-width=".75"/>
<rect x="70.8" y="699" width="74.5" height="7.500" fill="none" stroke="#a4a9af" stroke-width=".75"/>
<rect x="72.8" y="706.5" width="70.5" height="5" fill="none" stroke="#a4a9af" stroke-width=".75"/>
<rect x="157.7" y="699" width="73.8" height="7.500" fill="none" stroke="#a4a9af" stroke-width=".75"/>
<rect x="159.7" y="706.5" width="69.8" height="5" fill="none" stroke="#a4a9af" stroke-width=".75"/>
<rect x="249.5" y="699" width="75.5" height="7.500" fill="none" stroke="#a4a9af" stroke-width=".75"/>
<rect x="251.5" y="706.5" width="71.5" height="5" fill="none" stroke="#a4a9af" stroke-width=".75"/>
<rect x="337" y="699" width="83" height="7.500" fill="none" stroke="#a4a9af" stroke-width=".75"/>
<rect x="339" y="706.5" width="79" height="5" fill="none" stroke="#a4a9af" stroke-width=".75"/>
<rect x="1244" y="699" width="61.8" height="7.500" fill="none" stroke="#a4a9af" stroke-width=".75"/>
<rect x="1246" y="706.5" width="57.8" height="5" fill="none" stroke="#a4a9af" stroke-width=".75"/>
<rect x="1327.7" y="699" width="73.8" height="7.500" fill="none" stroke="#a4a9af" stroke-width=".75"/>
<rect x="1329.7" y="706.5" width="69.8" height="5" fill="none" stroke="#a4a9af" stroke-width=".75"/>
<rect x="1413.5" y="699" width="73.8" height="7.500" fill="none" stroke="#a4a9af" stroke-width=".75"/>
<rect x="1415.5" y="706.5" width="69.8" height="5" fill="none" stroke="#a4a9af" stroke-width=".75"/>
<rect x="58" y="339" width="11" height="37.4" fill="none" stroke="#a4a9af" stroke-width=".9"/>
<path d="M63.500 339V376.4" stroke="#a4a9af" stroke-width=".7"/>
<rect x="58" y="388.6" width="11" height="38.4" fill="none" stroke="#a4a9af" stroke-width=".9"/>
<path d="M63.500 388.6V427" stroke="#a4a9af" stroke-width=".7"/>
<rect x="46" y="452" width="10" height="38" fill="none" stroke="#a4a9af" stroke-width=".9"/><path d="M51 452v38" stroke="#a4a9af" stroke-width=".7"/>
<rect x="1507" y="445" width="10" height="45" fill="none" stroke="#a4a9af" stroke-width=".9"/><path d="M1512 445v45" stroke="#a4a9af" stroke-width=".7"/>
<path d="M84.3 387.300V376.400H80.5V339.500H126.7V376.400H122.9V387.300" fill="#2b2b2b" stroke="#a4a9af" stroke-width=".9"/>
<path d="M84.3 387H103.5" stroke="#a4a9af" stroke-width=".8"/>
<path d="M135.2 387.300V376.400H131.4V339.500H174.4V376.400H170.6V387.300" fill="#2b2b2b" stroke="#a4a9af" stroke-width=".9"/>
<path d="M135.2 387H154.4" stroke="#a4a9af" stroke-width=".8"/>
<path d="M183.3 387.300V376.400H179.5V339.500H225V376.400H221.2V387.300" fill="#2b2b2b" stroke="#a4a9af" stroke-width=".9"/>
<path d="M183.3 387H202.5" stroke="#a4a9af" stroke-width=".8"/>
<path d="M57.500 601H240.500V699.500M63 606V693H237M114.800 606.500H237" stroke="#a4a9af" stroke-width=".8" fill="none" opacity=".8"/>
<path d="M114.8 606.500V650.300" stroke="#a4a9af" stroke-width=".8" fill="none"/>
<path d="M114.8 654V698.700" stroke="#a4a9af" stroke-width=".8" fill="none" stroke-dasharray="4 2.500"/>
<path d="M123 606.500V650.300" stroke="#a4a9af" stroke-width=".8" fill="none"/>
<path d="M123 654V698.700" stroke="#a4a9af" stroke-width=".8" fill="none" stroke-dasharray="4 2.500"/>
<path d="M131.2 606.500V650.300" stroke="#a4a9af" stroke-width=".8" fill="none"/>
<path d="M131.2 654V698.700" stroke="#a4a9af" stroke-width=".8" fill="none" stroke-dasharray="4 2.500"/>
<path d="M139.4 606.500V650.300" stroke="#a4a9af" stroke-width=".8" fill="none"/>
<path d="M139.4 654V698.700" stroke="#a4a9af" stroke-width=".8" fill="none" stroke-dasharray="4 2.500"/>
<path d="M147.6 606.500V650.300" stroke="#a4a9af" stroke-width=".8" fill="none"/>
<path d="M147.6 654V698.700" stroke="#a4a9af" stroke-width=".8" fill="none" stroke-dasharray="4 2.500"/>
<path d="M155.8 654V698.700" stroke="#a4a9af" stroke-width=".8" fill="none" stroke-dasharray="4 2.500"/>
<path d="M164 606.500V650.300" stroke="#a4a9af" stroke-width=".8" fill="none" stroke-dasharray="4 2.500"/>
<path d="M164 654V698.700" stroke="#a4a9af" stroke-width=".8" fill="none" stroke-dasharray="4 2.500"/>
<path d="M172.2 606.500V650.300" stroke="#a4a9af" stroke-width=".8" fill="none" stroke-dasharray="4 2.500"/>
<path d="M172.2 654V698.700" stroke="#a4a9af" stroke-width=".8" fill="none" stroke-dasharray="4 2.500"/>
<path d="M180.4 606.500V650.300" stroke="#a4a9af" stroke-width=".8" fill="none" stroke-dasharray="4 2.500"/>
<path d="M180.4 654V698.700" stroke="#a4a9af" stroke-width=".8" fill="none" stroke-dasharray="4 2.500"/>
<path d="M188.6 606.500V650.300" stroke="#a4a9af" stroke-width=".8" fill="none" stroke-dasharray="4 2.500"/>
<path d="M188.6 654V698.700" stroke="#a4a9af" stroke-width=".8" fill="none" stroke-dasharray="4 2.500"/>
<path d="M196.8 654V698.700" stroke="#a4a9af" stroke-width=".8" fill="none" stroke-dasharray="4 2.500"/>
<path d="M114.800 652H195.500V606.500M114.800 606.500V698.700" stroke="#a4a9af" stroke-width=".8" fill="none"/>
<path d="M147 606.500L165 651M151 606.500L169 651" stroke="#a4a9af" stroke-width=".8" fill="none"/>
<path d="M114.800 629H155M150 624.500l5 4.500-5 4.500" stroke="#a4a9af" stroke-width=".8" fill="none"/>
<path d="M160 629H218V676.400H116" stroke="#a4a9af" stroke-width=".8" fill="none" stroke-dasharray="5 3"/>
<path d="M121 672l-5 4.400 5 4.400" stroke="#a4a9af" stroke-width=".8" fill="none"/>
<circle cx="114.800" cy="629" r="3" fill="#aaa"/>
<path d="M72 600.500V579Q90 580 92.500 600.500M114 600.500V579Q96 580 93.500 600.500" stroke="#c89a5c" stroke-width=".9" fill="none"/>
<path d="M213 272H240M213 272Q214 298 240 300" stroke="#d2a878" stroke-width=".9" fill="none"/>
<path d="M272.200 397Q299 398 300.400 423.500M272.200 397V423.500" stroke="#d2a878" stroke-width=".9" fill="none"/>
<path d="M245 530Q270 530 272 557 260 558 245 558" stroke="#d2a878" stroke-width=".9" fill="none"/>
<path d="M1412 297Q1436 298 1438 325H1412M1412 381Q1436 382 1438 409H1412" stroke="#d2a878" stroke-width=".9" fill="none"/>
<path d="M1349 397Q1374 398 1376 424M1349 397V424" stroke="#d2a878" stroke-width=".9" fill="none"/>
<path d="M1448 540V562Q1464 560 1466 540M1349 518H1365Q1364 534 1349 537" stroke="#d2a878" stroke-width=".9" fill="none"/>
<path d="M1323 545H1406V699H1323ZM1323 637H1406M1375 637V595H1384M1384 595V612Q1393 610 1395 595M1370 545V562Q1380 560 1381 545M1330 645V662Q1345 660 1347 645M1365 645Q1380 645 1383 665H1406" stroke="#a4a9af" stroke-width=".8" fill="none"/>
<ellipse cx="1399" cy="577" rx="5" ry="8" stroke="#a4a9af" stroke-width=".8" fill="none"/>
<ellipse cx="1391" cy="625" rx="5.5" ry="7" stroke="#a4a9af" stroke-width=".8" fill="none"/>
<ellipse cx="1395" cy="657" rx="7" ry="5.5" stroke="#a4a9af" stroke-width=".8" fill="none"/>
<ellipse cx="1400" cy="688" rx="5" ry="8" stroke="#a4a9af" stroke-width=".8" fill="none"/>
<path d="M1234 509V699M1316 509V699" stroke="#a4a9af" stroke-width=".8" fill="none"/>
<path d="M1234 573H1272.500" stroke="#a4a9af" stroke-width=".8" fill="none" stroke-dasharray="4 2.500"/><path d="M1278 573H1316" stroke="#a4a9af" stroke-width=".8" fill="none"/>
<path d="M1234 581.8H1272.500" stroke="#a4a9af" stroke-width=".8" fill="none" stroke-dasharray="4 2.500"/><path d="M1278 581.8H1316" stroke="#a4a9af" stroke-width=".8" fill="none"/>
<path d="M1234 590.5H1272.500" stroke="#a4a9af" stroke-width=".8" fill="none" stroke-dasharray="4 2.500"/><path d="M1278 590.5H1316" stroke="#a4a9af" stroke-width=".8" fill="none"/>
<path d="M1234 599.3H1272.500" stroke="#a4a9af" stroke-width=".8" fill="none" stroke-dasharray="4 2.500"/><path d="M1278 599.3H1316" stroke="#a4a9af" stroke-width=".8" fill="none"/>
<path d="M1234 608H1272.500" stroke="#a4a9af" stroke-width=".8" fill="none" stroke-dasharray="4 2.500"/><path d="M1278 608H1316" stroke="#a4a9af" stroke-width=".8" fill="none"/>
<path d="M1234 616.8H1272.500" stroke="#a4a9af" stroke-width=".8" fill="none" stroke-dasharray="4 2.500"/><path d="M1278 616.8H1316" stroke="#a4a9af" stroke-width=".8" fill="none"/>
<path d="M1234 625.6H1272.500" stroke="#a4a9af" stroke-width=".8" fill="none" stroke-dasharray="4 2.500"/><path d="M1278 625.6H1316" stroke="#a4a9af" stroke-width=".8" fill="none"/>
<path d="M1234 634.3H1272.500" stroke="#a4a9af" stroke-width=".8" fill="none" stroke-dasharray="4 2.500"/><path d="M1278 634.3H1316" stroke="#a4a9af" stroke-width=".8" fill="none"/>
<path d="M1234 643.1H1272.500" stroke="#a4a9af" stroke-width=".8" fill="none" stroke-dasharray="4 2.500"/><path d="M1278 643.1H1316" stroke="#a4a9af" stroke-width=".8" fill="none"/>
<path d="M1234 651.8H1272.500" stroke="#a4a9af" stroke-width=".8" fill="none" stroke-dasharray="4 2.500"/><path d="M1278 651.8H1316" stroke="#a4a9af" stroke-width=".8" fill="none"/>
<path d="M1234 660.6H1272.500" stroke="#a4a9af" stroke-width=".8" fill="none" stroke-dasharray="4 2.500"/><path d="M1278 660.6H1316" stroke="#a4a9af" stroke-width=".8" fill="none"/>
<path d="M1272.500 573V660.600M1278 573V660.600" stroke="#a4a9af" stroke-width=".8" fill="none"/>
<path d="M1252 660.600V678.400H1297V660.600" stroke="#a4a9af" stroke-width=".8" fill="none" stroke-dasharray="5 3"/>
<path d="M1252.500 655V574.500M1249.500 578.500l3-4 3 4M1297 573V614M1294 610l3 4 3-4" stroke="#a4a9af" stroke-width=".8" fill="none"/>
<path d="M1278 625L1316 607.300M1278 629L1316 611.300" stroke="#a4a9af" stroke-width=".8" fill="none"/>
<circle cx="1297" cy="572.500" r="3" fill="#aaa"/>
<path d="M1264.300 509V538.800Q1288 537 1290 509" stroke="#a4a9af" stroke-width=".8" fill="none"/>
<path d="M106.300 304V308.600H300M118 288V308.600M166.500 304V308.600M178.400 288V308.600" stroke="#8b1408" stroke-width="1.300" fill="none"/>
<path d="M278 308.600V493M278 350H298M278 335H290M278 308.600H303" stroke="#8b1408" stroke-width="1.300" fill="none"/>
<path d="M129 493H420M216 425V455M173 461V493M129 461H173M129 493V600M129 531H173V493M129 580H173V493M322 493V640M322 576H340M322 588H345M322 635H340M322 647H345M322 640V650" stroke="#8b1408" stroke-width="1.300" fill="none"/>
<path d="M283 388H420M321.500 388V457.500M206 425V457.500H420M259 436V457.500M129 493V580H173M129 531H173M322 564H374" stroke="#e28c64" stroke-width="1" fill="none"/>
<path d="M1255.100 288V493M1248 288H1255.100M1234 301H1255.100M1250 349H1255.100M1234 361H1255.100" stroke="#8b1408" stroke-width="1.300" fill="none"/>
<path d="M1389.600 288V493M1382 288H1389.600M1370 301H1389.600M1384 349H1389.600M1370 361H1389.600" stroke="#8b1408" stroke-width="1.300" fill="none"/>
<path d="M1448.600 268V660M1448.600 268H1467M1448.600 280H1458M1448.600 309H1467M1448.600 321H1458M1448.600 376H1471M1448.600 390H1456M1448.600 402H1468M1448.600 416H1456M1448.600 598H1461M1448.600 609H1468M1448.600 648H1461M1448.600 659.500H1468" stroke="#8b1408" stroke-width="1.300" fill="none"/>
<path d="M1221 493H1448.600M1333 493V525" stroke="#8b1408" stroke-width="1.300" fill="none"/>
<path d="M1255 372.200H1389.600M1307 372.200V455M1221 457.200H1449M1286 457.200V493M1333 457.200V493" stroke="#e28c64" stroke-width="1" fill="none"/>
<circle cx="173" cy="493" r="3.600" fill="#8a5420" stroke="#8b1408" stroke-width="1.600"/>
<circle cx="216" cy="493.5" r="3.600" fill="#8a5420" stroke="#8b1408" stroke-width="1.600"/>
<circle cx="278" cy="493.5" r="3.600" fill="#8a5420" stroke="#8b1408" stroke-width="1.600"/>
<circle cx="322" cy="493.5" r="3.600" fill="#8a5420" stroke="#8b1408" stroke-width="1.600"/>
<circle cx="1255.1" cy="493" r="3.600" fill="#8a5420" stroke="#8b1408" stroke-width="1.600"/>
<circle cx="1301" cy="493" r="3.600" fill="#8a5420" stroke="#8b1408" stroke-width="1.600"/>
<circle cx="1370.8" cy="493" r="3.600" fill="#8a5420" stroke="#8b1408" stroke-width="1.600"/>
<circle cx="1389.6" cy="493" r="3.600" fill="#8a5420" stroke="#8b1408" stroke-width="1.600"/>
<circle cx="1448.6" cy="493" r="3.600" fill="#8a5420" stroke="#8b1408" stroke-width="1.600"/>
<rect x="252" y="430" width="11" height="6.500" fill="#8a5420" stroke="#6a1a08" stroke-width="1"/>
<rect x="315" y="430" width="11" height="6.500" fill="#8a5420" stroke="#6a1a08" stroke-width="1"/>
<rect x="1300" y="430" width="11" height="6.500" fill="#8a5420" stroke="#6a1a08" stroke-width="1"/>
<rect x="1454" y="430" width="11" height="6.500" fill="#8a5420" stroke="#6a1a08" stroke-width="1"/>
<rect x="1280" y="500" width="11" height="6.500" fill="#6a4a22" stroke="#e8a080" stroke-width=".8"/>
<rect x="1295" y="500" width="11" height="6.500" fill="#6a4a22" stroke="#e8a080" stroke-width=".8"/>
<path d="M1326 526l8-6v6z" fill="#b01808"/><rect x="1323" y="510" width="14" height="18" fill="none" stroke="#a4a9af" stroke-width=".7"/>
<rect x="111" y="276" width="12" height="12" fill="#c8421a" opacity=".92"/><rect x="114.5" y="279.5" width="5" height="5" fill="#e4532a" opacity=".9"/>
<rect x="171.5" y="276" width="12" height="12" fill="#c8421a" opacity=".92"/><rect x="175" y="279.5" width="5" height="5" fill="#e4532a" opacity=".9"/>
<rect x="284" y="313" width="12" height="12" fill="#c8421a" opacity=".92"/><rect x="287.5" y="316.5" width="5" height="5" fill="#e4532a" opacity=".9"/>
<rect x="284" y="356" width="12" height="12" fill="#c8421a" opacity=".92"/><rect x="287.5" y="359.5" width="5" height="5" fill="#e4532a" opacity=".9"/>
<rect x="356" y="293.5" width="12" height="12" fill="#c8421a" opacity=".92"/><rect x="359.5" y="297" width="5" height="5" fill="#e4532a" opacity=".9"/>
<rect x="356" y="354.5" width="12" height="12" fill="#c8421a" opacity=".92"/><rect x="359.5" y="358" width="5" height="5" fill="#e4532a" opacity=".9"/>
<rect x="1225" y="294" width="12" height="12" fill="#c8421a" opacity=".92"/><rect x="1228.5" y="297.5" width="5" height="5" fill="#e4532a" opacity=".9"/>
<rect x="1225" y="355.5" width="12" height="12" fill="#c8421a" opacity=".92"/><rect x="1228.5" y="359" width="5" height="5" fill="#e4532a" opacity=".9"/>
<rect x="1358" y="294" width="12" height="12" fill="#c8421a" opacity=".92"/><rect x="1361.5" y="297.5" width="5" height="5" fill="#e4532a" opacity=".9"/>
<rect x="1358" y="355.5" width="12" height="12" fill="#c8421a" opacity=".92"/><rect x="1361.5" y="359" width="5" height="5" fill="#e4532a" opacity=".9"/>
<rect x="1454.5" y="273" width="12" height="12" fill="#c8421a" opacity=".92"/><rect x="1458" y="276.5" width="5" height="5" fill="#e4532a" opacity=".9"/>
<rect x="1454.5" y="314.5" width="12" height="12" fill="#c8421a" opacity=".92"/><rect x="1458" y="318" width="5" height="5" fill="#e4532a" opacity=".9"/>
<rect x="1469.5" y="369.5" width="12" height="12" fill="#c8421a" opacity=".92"/><rect x="1473" y="373" width="5" height="5" fill="#e4532a" opacity=".9"/>
<rect x="1454.5" y="590" width="12" height="12" fill="#c8421a" opacity=".92"/><rect x="1458" y="593.5" width="5" height="5" fill="#e4532a" opacity=".9"/>
<rect x="1454.5" y="641.5" width="12" height="12" fill="#c8421a" opacity=".92"/><rect x="1458" y="645" width="5" height="5" fill="#e4532a" opacity=".9"/>
<rect x="141" y="456" width="12" height="12" fill="#c8421a" opacity=".92"/><rect x="144.5" y="459.5" width="5" height="5" fill="#e4532a" opacity=".9"/>
<rect x="141" y="524" width="12" height="12" fill="#c8421a" opacity=".92"/><rect x="144.5" y="527.5" width="5" height="5" fill="#e4532a" opacity=".9"/>
<rect x="327" y="568" width="12" height="12" fill="#c8421a" opacity=".92"/><rect x="330.5" y="571.5" width="5" height="5" fill="#e4532a" opacity=".9"/>
<rect x="327" y="628" width="12" height="12" fill="#c8421a" opacity=".92"/><rect x="330.5" y="631.5" width="5" height="5" fill="#e4532a" opacity=".9"/>
<rect x="120" y="588" width="12" height="12" fill="#c8421a" opacity=".92"/><rect x="123.5" y="591.5" width="5" height="5" fill="#e4532a" opacity=".9"/>
<rect x="218" y="412" width="12" height="12" fill="#c8421a" opacity=".92"/><rect x="221.5" y="415.5" width="5" height="5" fill="#e4532a" opacity=".9"/>
<rect x="1237" y="495" width="12" height="12" fill="#c8421a" opacity=".92"/><rect x="1240.5" y="498.5" width="5" height="5" fill="#e4532a" opacity=".9"/>
<rect x="100.2" y="291" width="11.500" height="12.500" fill="none" stroke="#e27222" stroke-width="1" stroke-dasharray="2.500 1.300" opacity=".9"/><path d="M103 293.5h6l-6 7.500h6" fill="none" stroke="#e27222" stroke-width="1.100" opacity=".9"/>
<rect x="160.5" y="291" width="11.500" height="12.500" fill="none" stroke="#e27222" stroke-width="1" stroke-dasharray="2.500 1.300" opacity=".9"/><path d="M163.3 293.5h6l-6 7.500h6" fill="none" stroke="#e27222" stroke-width="1.100" opacity=".9"/>
<rect x="298" y="301.5" width="11.500" height="12.500" fill="none" stroke="#e27222" stroke-width="1" stroke-dasharray="2.500 1.300" opacity=".9"/><path d="M300.8 304h6l-6 7.500h6" fill="none" stroke="#e27222" stroke-width="1.100" opacity=".9"/>
<rect x="298" y="344" width="11.500" height="12.500" fill="none" stroke="#e27222" stroke-width="1" stroke-dasharray="2.500 1.300" opacity=".9"/><path d="M300.8 346.5h6l-6 7.500h6" fill="none" stroke="#e27222" stroke-width="1.100" opacity=".9"/>
<rect x="1240" y="282" width="11.500" height="12.500" fill="none" stroke="#e27222" stroke-width="1" stroke-dasharray="2.500 1.300" opacity=".9"/><path d="M1242.8 284.5h6l-6 7.500h6" fill="none" stroke="#e27222" stroke-width="1.100" opacity=".9"/>
<rect x="1239" y="343.5" width="11.500" height="12.500" fill="none" stroke="#e27222" stroke-width="1" stroke-dasharray="2.500 1.300" opacity=".9"/><path d="M1241.8 346h6l-6 7.500h6" fill="none" stroke="#e27222" stroke-width="1.100" opacity=".9"/>
<rect x="1373.5" y="282" width="11.500" height="12.500" fill="none" stroke="#e27222" stroke-width="1" stroke-dasharray="2.500 1.300" opacity=".9"/><path d="M1376.3 284.5h6l-6 7.500h6" fill="none" stroke="#e27222" stroke-width="1.100" opacity=".9"/>
<rect x="1373.5" y="343.5" width="11.500" height="12.500" fill="none" stroke="#e27222" stroke-width="1" stroke-dasharray="2.500 1.300" opacity=".9"/><path d="M1376.3 346h6l-6 7.500h6" fill="none" stroke="#e27222" stroke-width="1.100" opacity=".9"/>
<rect x="1467.5" y="262" width="11.500" height="12.500" fill="none" stroke="#e27222" stroke-width="1" stroke-dasharray="2.500 1.300" opacity=".9"/><path d="M1470.3 264.5h6l-6 7.500h6" fill="none" stroke="#e27222" stroke-width="1.100" opacity=".9"/>
<rect x="1467.5" y="303" width="11.500" height="12.500" fill="none" stroke="#e27222" stroke-width="1" stroke-dasharray="2.500 1.300" opacity=".9"/><path d="M1470.3 305.5h6l-6 7.500h6" fill="none" stroke="#e27222" stroke-width="1.100" opacity=".9"/>
<rect x="1453.5" y="384.5" width="11.500" height="12.500" fill="none" stroke="#e27222" stroke-width="1" stroke-dasharray="2.500 1.300" opacity=".9"/><path d="M1456.3 387h6l-6 7.500h6" fill="none" stroke="#e27222" stroke-width="1.100" opacity=".9"/>
<rect x="1453.5" y="410.5" width="11.500" height="12.500" fill="none" stroke="#e27222" stroke-width="1" stroke-dasharray="2.500 1.300" opacity=".9"/><path d="M1456.3 413h6l-6 7.500h6" fill="none" stroke="#e27222" stroke-width="1.100" opacity=".9"/>
<rect x="1467.5" y="396.5" width="11.500" height="12.500" fill="none" stroke="#e27222" stroke-width="1" stroke-dasharray="2.500 1.300" opacity=".9"/><path d="M1470.3 399h6l-6 7.500h6" fill="none" stroke="#e27222" stroke-width="1.100" opacity=".9"/>
<rect x="1467.5" y="602" width="11.500" height="12.500" fill="none" stroke="#e27222" stroke-width="1" stroke-dasharray="2.500 1.300" opacity=".9"/><path d="M1470.3 604.5h6l-6 7.500h6" fill="none" stroke="#e27222" stroke-width="1.100" opacity=".9"/>
<rect x="1467.5" y="653" width="11.500" height="12.500" fill="none" stroke="#e27222" stroke-width="1" stroke-dasharray="2.500 1.300" opacity=".9"/><path d="M1470.3 655.5h6l-6 7.500h6" fill="none" stroke="#e27222" stroke-width="1.100" opacity=".9"/>
<rect x="151.5" y="462.5" width="11.500" height="12.500" fill="none" stroke="#e27222" stroke-width="1" stroke-dasharray="2.500 1.300" opacity=".9"/><path d="M154.3 465h6l-6 7.500h6" fill="none" stroke="#e27222" stroke-width="1.100" opacity=".9"/>
<rect x="152.5" y="534.5" width="11.500" height="12.500" fill="none" stroke="#e27222" stroke-width="1" stroke-dasharray="2.500 1.300" opacity=".9"/><path d="M155.3 537h6l-6 7.500h6" fill="none" stroke="#e27222" stroke-width="1.100" opacity=".9"/>
<rect x="340" y="579.5" width="11.500" height="12.500" fill="none" stroke="#e27222" stroke-width="1" stroke-dasharray="2.500 1.300" opacity=".9"/><path d="M342.8 582h6l-6 7.500h6" fill="none" stroke="#e27222" stroke-width="1.100" opacity=".9"/>
<rect x="340" y="641.5" width="11.500" height="12.500" fill="none" stroke="#e27222" stroke-width="1" stroke-dasharray="2.500 1.300" opacity=".9"/><path d="M342.8 644h6l-6 7.500h6" fill="none" stroke="#e27222" stroke-width="1.100" opacity=".9"/>
<rect x="359" y="476" width="11.500" height="12.500" fill="none" stroke="#e27222" stroke-width="1" stroke-dasharray="2.500 1.300" opacity=".9"/><path d="M361.8 478.5h6l-6 7.500h6" fill="none" stroke="#e27222" stroke-width="1.100" opacity=".9"/>
<rect x="1364" y="467" width="11.500" height="12.500" fill="none" stroke="#e27222" stroke-width="1" stroke-dasharray="2.500 1.300" opacity=".9"/><path d="M1366.8 469.5h6l-6 7.500h6" fill="none" stroke="#e27222" stroke-width="1.100" opacity=".9"/>
<rect x="1352" y="477" width="11.500" height="12.500" fill="none" stroke="#e27222" stroke-width="1" stroke-dasharray="2.500 1.300" opacity=".9"/><path d="M1354.8 479.5h6l-6 7.500h6" fill="none" stroke="#e27222" stroke-width="1.100" opacity=".9"/>
<circle cx="142.6" cy="319.5" r="9" fill="none" stroke="#efba9a" stroke-width="1"/><text x="142.6" y="322.6" font-size="8.800" text-anchor="middle" fill="#efba9a" textLength="13" lengthAdjust="spacingAndGlyphs">201</text>
<circle cx="315.5" cy="333" r="9" fill="none" stroke="#efba9a" stroke-width="1"/><text x="315.5" y="336.1" font-size="8.800" text-anchor="middle" fill="#efba9a" textLength="13" lengthAdjust="spacingAndGlyphs">202</text>
<circle cx="372" cy="330" r="9" fill="none" stroke="#efba9a" stroke-width="1"/><text x="372" y="333.1" font-size="8.800" text-anchor="middle" fill="#efba9a" textLength="13" lengthAdjust="spacingAndGlyphs">203</text>
<circle cx="332.5" cy="607" r="9" fill="none" stroke="#efba9a" stroke-width="1"/><text x="332.5" y="610.1" font-size="8.800" text-anchor="middle" fill="#efba9a" textLength="13" lengthAdjust="spacingAndGlyphs">220</text>
<circle cx="1230" cy="331.5" r="9" fill="none" stroke="#efba9a" stroke-width="1"/><text x="1230" y="334.6" font-size="8.800" text-anchor="middle" fill="#efba9a" textLength="13" lengthAdjust="spacingAndGlyphs">209</text>
<circle cx="1364.8" cy="331.5" r="9" fill="none" stroke="#efba9a" stroke-width="1"/><text x="1364.8" y="334.6" font-size="8.800" text-anchor="middle" fill="#efba9a" textLength="13" lengthAdjust="spacingAndGlyphs">210</text>
<circle cx="1429.5" cy="260.5" r="9" fill="none" stroke="#efba9a" stroke-width="1"/><text x="1429.5" y="263.6" font-size="8.800" text-anchor="middle" fill="#efba9a" textLength="13" lengthAdjust="spacingAndGlyphs">211</text>
<circle cx="1424.3" cy="400.2" r="9" fill="none" stroke="#efba9a" stroke-width="1"/><text x="1424.3" y="403.3" font-size="8.800" text-anchor="middle" fill="#efba9a" textLength="13" lengthAdjust="spacingAndGlyphs">212</text>
<circle cx="1428.3" cy="622.4" r="9" fill="none" stroke="#efba9a" stroke-width="1"/><text x="1428.3" y="625.5" font-size="8.800" text-anchor="middle" fill="#efba9a" textLength="13" lengthAdjust="spacingAndGlyphs">213</text>
<circle cx="1332.5" cy="555.7" r="9" fill="none" stroke="#e09ad0" stroke-width="1"/><text x="1332.5" y="558.8" font-size="8.800" text-anchor="middle" fill="#e09ad0" textLength="13" lengthAdjust="spacingAndGlyphs">223</text>
<circle cx="1364.4" cy="591.3" r="9" fill="none" stroke="#e09ad0" stroke-width="1"/><text x="1364.4" y="594.4" font-size="8.800" text-anchor="middle" fill="#e09ad0" textLength="13" lengthAdjust="spacingAndGlyphs">221</text>
<circle cx="1364.4" cy="670.7" r="9" fill="none" stroke="#e09ad0" stroke-width="1"/><text x="1364.4" y="673.8" font-size="8.800" text-anchor="middle" fill="#e09ad0" textLength="13" lengthAdjust="spacingAndGlyphs">222</text>
<path d="M63.200 693V622M56.400 621.700L63.200 598.300 70 621.700ZM63.200 598.300V621.700M63.200 693H134M134 686.200L158.200 693 134 699.800ZM134 693H158.200" stroke="#e6e6e6" stroke-width="1" fill="none"/>
<rect x="53.500" y="683.500" width="19.500" height="19" fill="#4a1210" stroke="#e6e6e6" stroke-width="1"/><rect x="57" y="687" width="12.500" height="12" rx="3" fill="none" stroke="#c07070" stroke-width=".9"/><path d="M63.200 683.500v19M53.500 693h19.500" stroke="#c07070" stroke-width=".7"/>
<path d="M59.500 573l4.500 5.500 4.500-5.500M64 578.500V584M172 688l9.500 9.500M181.500 688l-9.500 9.500" stroke="#dcdcdc" stroke-width="1" fill="none"/>
<g stroke="#8c8478" stroke-width=".8" fill="none" opacity=".85"><circle cx="1443.400" cy="218.600" r="68.600"/><circle cx="1443.400" cy="218.600" r="44.700"/><path d="M1443.400 150V287.200M1374.800 218.600H1512"/></g>
<circle cx="1443.400" cy="218.600" r="3.800" fill="#a87850"/>
<rect x="1420.700" y="288.800" width="42.700" height="12.800" rx="6.400" fill="#80705e" opacity=".92"/><text x="1442" y="298.500" font-size="9.300" text-anchor="middle" fill="#d8d0c6">Сверху</text>
<path d="M32.500 136V802M1527.500 136V802" stroke="#7c7c7c" stroke-width="1.200"/>
</svg>
<div class="pill" style="left:7px;width:21.5px">+</div>
<div class="pill" style="left:31px;width:43px">Сверху</div>
<div class="pill" style="left:78px;width:54px">2D-каркас</div>
<div class="pill" style="left:137px;width:124px">— нет связанных видов —</div>
</div><!--draw-->
<div id="dlg">
<svg class="abs" style="left:6px;top:5px" width="13" height="14" viewBox="0 0 23 27"><path d="M5 1.500H21.500V15Q21.500 25.500 9 25.500H1.500V6Q1.500 1.500 5 1.500Z" fill="url(#lg)"/><path d="M12.500 3V24" stroke="#1a6fa8" stroke-width="1.500"/><path d="M9.500 9.500h4v9h-4a1.200 1.200 0 0 1-1.200-1.200v-6.600a1.200 1.200 0 0 1 1.200-1.200z" fill="#e8f4fc"/></svg>
<div class="t" style="left:24px;top:6px;font-size:9.750px;color:#111">Мастер проверок</div>
<svg class="abs" style="left:740px;top:0" width="108" height="24" viewBox="0 0 108 24"><path d="M11 12h8" stroke="#222" stroke-width="1"/><rect x="47.500" y="7.500" width="7.500" height="7.500" fill="none" stroke="#222" stroke-width="1"/><path d="M84.500 7.500l7.500 7.500M92 7.500l-7.500 7.500" stroke="#222" stroke-width="1"/></svg>
<div class="abs" id="tree" style="left:1px;top:24px;width:330px;height:604.500px;border:1px solid #b4b4b4;border-left:none;overflow:hidden;background:#fff">
<div class="row" style="left:0;top:1.6px;width:316px"><div class="tri" style="left:5.9px"></div><div class="cb" style="left:19.4px"><svg viewBox="0 0 10 10"><path d="M1.800 5.200l2.200 2.800L8.300 1.800" fill="none" stroke="#111" stroke-width="1.600"/></svg></div><div class="rs" style="left:34.2px"><svg viewBox="0 0 10 10"><path d="M2 2l6 6M8 2l-6 6" fill="none" stroke="#e8501c" stroke-width="1.400"/></svg></div><span class="abs" style="left:52.4px;top:0">Проверки построения сети</span></div>
<div class="row" style="left:0;top:16.22px;width:316px"><div class="cb" style="left:35px"><svg viewBox="0 0 10 10"><path d="M1.800 5.200l2.200 2.800L8.300 1.800" fill="none" stroke="#111" stroke-width="1.600"/></svg></div><div class="rs" style="left:49.8px"><svg viewBox="0 0 10 10"><path d="M1.800 5.200l2.200 3L8.500 1.300" fill="none" stroke="#1f9a1f" stroke-width="1.600"/></svg></div><span class="abs" style="left:68px;top:0">Наличие привязки к БД</span></div>
<div class="row" style="left:0;top:30.83px;width:316px"><div class="cb" style="left:35px"><svg viewBox="0 0 10 10"><path d="M1.800 5.200l2.200 2.800L8.300 1.800" fill="none" stroke="#111" stroke-width="1.600"/></svg></div><div class="rs" style="left:49.8px"><svg viewBox="0 0 10 10"><path d="M1.800 5.200l2.200 3L8.500 1.300" fill="none" stroke="#1f9a1f" stroke-width="1.600"/></svg></div><span class="abs" style="left:68px;top:0">Геометрия трасс</span></div>
<div class="row" style="left:0;top:45.44px;width:316px"><div class="cb" style="left:35px"><svg viewBox="0 0 10 10"><path d="M1.800 5.200l2.200 2.800L8.300 1.800" fill="none" stroke="#111" stroke-width="1.600"/></svg></div><div class="rs" style="left:49.8px"><svg viewBox="0 0 10 10"><path d="M1.800 5.200l2.200 3L8.500 1.300" fill="none" stroke="#1f9a1f" stroke-width="1.600"/></svg></div><span class="abs" style="left:68px;top:0">Наличие подходящих к объекту трасс</span></div>
<div class="row" style="left:0;top:60.06px;width:316px"><div class="cb" style="left:35px"><svg viewBox="0 0 10 10"><path d="M1.800 5.200l2.200 2.800L8.300 1.800" fill="none" stroke="#111" stroke-width="1.600"/></svg></div><div class="rs" style="left:49.8px"><svg viewBox="0 0 10 10"><path d="M1.800 5.200l2.200 3L8.500 1.300" fill="none" stroke="#1f9a1f" stroke-width="1.600"/></svg></div><span class="abs" style="left:68px;top:0">Установка используемого кабеля</span></div>
<div class="row" style="left:0;top:74.68px;width:316px"><div class="cb" style="left:35px"><svg viewBox="0 0 10 10"><path d="M1.800 5.200l2.200 2.800L8.300 1.800" fill="none" stroke="#111" stroke-width="1.600"/></svg></div><div class="rs" style="left:49.8px"><svg viewBox="0 0 10 10"><path d="M1.800 5.200l2.200 3L8.500 1.300" fill="none" stroke="#1f9a1f" stroke-width="1.600"/></svg></div><span class="abs" style="left:68px;top:0">Подключение устройств трассами</span></div>
<div class="row" style="left:0;top:89.29px;width:316px"><div class="cb" style="left:35px"><svg viewBox="0 0 10 10"><path d="M1.800 5.200l2.200 2.800L8.300 1.800" fill="none" stroke="#111" stroke-width="1.600"/></svg></div><div class="rs" style="left:49.8px"><svg viewBox="0 0 10 10"><path d="M1.800 5.200l2.200 3L8.500 1.300" fill="none" stroke="#1f9a1f" stroke-width="1.600"/></svg></div><span class="abs" style="left:68px;top:0">Прокладка шлейфа по этажам</span></div>
<div class="row" style="left:0;top:103.9px;width:316px"><div class="cb" style="left:35px"><svg viewBox="0 0 10 10"><path d="M1.800 5.200l2.200 2.800L8.300 1.800" fill="none" stroke="#111" stroke-width="1.600"/></svg></div><div class="rs" style="left:49.8px"><svg viewBox="0 0 10 10"><path d="M1.800 5.200l2.200 3L8.500 1.300" fill="none" stroke="#1f9a1f" stroke-width="1.600"/></svg></div><span class="abs" style="left:68px;top:0">Подсоединения объектов</span></div>
<div class="row" style="left:0;top:118.52px;width:316px"><div class="cb" style="left:35px"><svg viewBox="0 0 10 10"><path d="M1.800 5.200l2.200 2.800L8.300 1.800" fill="none" stroke="#111" stroke-width="1.600"/></svg></div><div class="rs" style="left:49.8px"><svg viewBox="0 0 10 10"><path d="M2 2l6 6M8 2l-6 6" fill="none" stroke="#e8501c" stroke-width="1.400"/></svg></div><span class="abs" style="left:68px;top:0">Проверка сопротивлений кабелей</span></div>
<div class="row" style="left:0;top:133.13px;width:316px"><div class="cb" style="left:35px"><svg viewBox="0 0 10 10"><path d="M1.800 5.200l2.200 2.800L8.300 1.800" fill="none" stroke="#111" stroke-width="1.600"/></svg></div><div class="rs" style="left:49.8px"><svg viewBox="0 0 10 10"><path d="M2 2l6 6M8 2l-6 6" fill="none" stroke="#e8501c" stroke-width="1.400"/></svg></div><span class="abs" style="left:68px;top:0">Емкость кабель каналов</span></div>
<div class="row" style="left:0;top:147.75px;width:316px"><div class="tri" style="left:21.5px"></div><div class="cb" style="left:35px"><svg viewBox="0 0 10 10"><path d="M1.800 5.200l2.200 2.800L8.300 1.800" fill="none" stroke="#111" stroke-width="1.600"/></svg></div><div class="rs" style="left:49.8px"><svg viewBox="0 0 10 10"><path d="M2 2l6 6M8 2l-6 6" fill="none" stroke="#e8501c" stroke-width="1.400"/></svg></div><span class="abs" style="left:68px;top:0">Проверки сети пожарной сигнализации</span></div>
<div class="row" style="left:0;top:162.37px;width:316px"><div class="cb" style="left:50.6px"><svg viewBox="0 0 10 10"><path d="M1.800 5.200l2.200 2.800L8.300 1.800" fill="none" stroke="#111" stroke-width="1.600"/></svg></div><div class="rs" style="left:65.4px"><svg viewBox="0 0 10 10"><path d="M2 2l6 6M8 2l-6 6" fill="none" stroke="#e8501c" stroke-width="1.400"/></svg></div><span class="abs" style="left:83.6px;top:0">Алгоритм A</span></div>
<div class="row" style="left:0;top:176.98px;width:316px"><div class="cb" style="left:50.6px"><svg viewBox="0 0 10 10"><path d="M1.800 5.200l2.200 2.800L8.300 1.800" fill="none" stroke="#111" stroke-width="1.600"/></svg></div><div class="rs" style="left:65.4px"><svg viewBox="0 0 10 10"><path d="M1.800 5.200l2.200 3L8.500 1.300" fill="none" stroke="#1f9a1f" stroke-width="1.600"/></svg></div><span class="abs" style="left:83.6px;top:0">Алгоритм B</span></div>
<div class="row" style="left:0;top:191.6px;width:316px"><div class="cb" style="left:50.6px"><svg viewBox="0 0 10 10"><path d="M1.800 5.200l2.200 2.800L8.300 1.800" fill="none" stroke="#111" stroke-width="1.600"/></svg></div><div class="rs" style="left:65.4px"><svg viewBox="0 0 10 10"><path d="M2 2l6 6M8 2l-6 6" fill="none" stroke="#e8501c" stroke-width="1.400"/></svg></div><span class="abs" style="left:83.6px;top:0">Алгоритм C</span></div>
<div class="row" style="left:0;top:206.21px;width:316px"><div class="abs" style="left:48px;top:0;width:168px;height:14.600px;background:#dedede;border-radius:1px"></div><div class="cb" style="left:50.6px"><svg viewBox="0 0 10 10"><path d="M1.800 5.200l2.200 2.800L8.300 1.800" fill="none" stroke="#111" stroke-width="1.600"/></svg></div><div class="rs" style="left:65.4px"><svg viewBox="0 0 10 10"><path d="M2 2l6 6M8 2l-6 6" fill="none" stroke="#e8501c" stroke-width="1.400"/></svg></div><span class="abs" style="left:83.6px;top:0">Покрытие зон извещателями</span></div>
<div class="row" style="left:0;top:220.82px;width:316px"><div class="cb" style="left:50.6px"><svg viewBox="0 0 10 10"><path d="M1.800 5.200l2.200 2.800L8.300 1.800" fill="none" stroke="#111" stroke-width="1.600"/></svg></div><div class="rs" style="left:65.4px"><svg viewBox="0 0 10 10"><path d="M1.800 5.200l2.200 3L8.500 1.300" fill="none" stroke="#1f9a1f" stroke-width="1.600"/></svg></div><span class="abs" style="left:83.6px;top:0">Число извещателей в ЗКПС</span></div>
<div class="row" style="left:0;top:235.44px;width:316px"><div class="cb" style="left:50.6px"><svg viewBox="0 0 10 10"><path d="M1.800 5.200l2.200 2.800L8.300 1.800" fill="none" stroke="#111" stroke-width="1.600"/></svg></div><div class="rs" style="left:65.4px"><svg viewBox="0 0 10 10"><path d="M2 2l6 6M8 2l-6 6" fill="none" stroke="#e8501c" stroke-width="1.400"/></svg></div><span class="abs" style="left:83.6px;top:0">Подключение в неадресный радиальный шлейф</span></div>
<div class="row" style="left:0;top:250.06px;width:316px"><div class="cb" style="left:50.6px"><svg viewBox="0 0 10 10"><path d="M1.800 5.200l2.200 2.800L8.300 1.800" fill="none" stroke="#111" stroke-width="1.600"/></svg></div><div class="rs" style="left:65.4px"><svg viewBox="0 0 10 10"><path d="M2 2l6 6M8 2l-6 6" fill="none" stroke="#e8501c" stroke-width="1.400"/></svg></div><span class="abs" style="left:83.6px;top:0">Подключение в адресный шлейф (информационную линию)</span></div>
<div class="row" style="left:0;top:264.67px;width:316px"><div class="cb" style="left:50.6px"><svg viewBox="0 0 10 10"><path d="M1.800 5.200l2.200 2.800L8.300 1.800" fill="none" stroke="#111" stroke-width="1.600"/></svg></div><div class="rs" style="left:65.4px"><svg viewBox="0 0 10 10"><path d="M1.800 5.200l2.200 3L8.500 1.300" fill="none" stroke="#1f9a1f" stroke-width="1.600"/></svg></div><span class="abs" style="left:83.6px;top:0">Площадь ЗКПС (меньше 2000 м²)</span></div>
<div class="row" style="left:0;top:279.28px;width:316px"><div class="cb" style="left:50.6px"><svg viewBox="0 0 10 10"><path d="M1.800 5.200l2.200 2.800L8.300 1.800" fill="none" stroke="#111" stroke-width="1.600"/></svg></div><div class="rs" style="left:65.4px"><svg viewBox="0 0 10 10"><path d="M1.800 5.200l2.200 3L8.500 1.300" fill="none" stroke="#1f9a1f" stroke-width="1.600"/></svg></div><span class="abs" style="left:83.6px;top:0">Площадь ЗКПС нескольких помещений (меньше 500 м²)</span></div>
<div class="row" style="left:0;top:293.9px;width:316px"><div class="cb" style="left:50.6px"><svg viewBox="0 0 10 10"><path d="M1.800 5.200l2.200 2.800L8.300 1.800" fill="none" stroke="#111" stroke-width="1.600"/></svg></div><div class="rs" style="left:65.4px"><svg viewBox="0 0 10 10"><path d="M2 2l6 6M8 2l-6 6" fill="none" stroke="#e8501c" stroke-width="1.400"/></svg></div><span class="abs" style="left:83.6px;top:0">Принадлежность извещателей к ЗКПС</span></div>
<div class="row" style="left:0;top:308.51px;width:316px"><div class="tri" style="left:21.5px"></div><div class="cb" style="left:35px"><svg viewBox="0 0 10 10"><path d="M1.800 5.200l2.200 2.800L8.300 1.800" fill="none" stroke="#111" stroke-width="1.600"/></svg></div><div class="rs" style="left:49.8px"><svg viewBox="0 0 10 10"><path d="M1.800 5.200l2.200 3L8.500 1.300" fill="none" stroke="#1f9a1f" stroke-width="1.600"/></svg></div><span class="abs" style="left:68px;top:0">Проверки ОКЛ</span></div>
<div class="row" style="left:0;top:323.13px;width:316px"><div class="cb" style="left:50.6px"><svg viewBox="0 0 10 10"><path d="M1.800 5.200l2.200 2.800L8.300 1.800" fill="none" stroke="#111" stroke-width="1.600"/></svg></div><div class="rs" style="left:65.4px"><svg viewBox="0 0 10 10"><path d="M1.800 5.200l2.200 3L8.500 1.300" fill="none" stroke="#1f9a1f" stroke-width="1.600"/></svg></div><span class="abs" style="left:83.6px;top:0">Прокладка ОКЛ</span></div>
<div class="row" style="left:0;top:337.75px;width:316px"><div class="cb" style="left:50.6px"><svg viewBox="0 0 10 10"><path d="M1.800 5.200l2.200 2.800L8.300 1.800" fill="none" stroke="#111" stroke-width="1.600"/></svg></div><div class="rs" style="left:65.4px"><svg viewBox="0 0 10 10"><path d="M1.800 5.200l2.200 3L8.500 1.300" fill="none" stroke="#1f9a1f" stroke-width="1.600"/></svg></div><span class="abs" style="left:83.6px;top:0">Корректность элементов по ТУ на ОКЛ</span></div>
<div class="row" style="left:0;top:352.36px;width:316px"><div class="tri" style="left:21.5px"></div><div class="cb" style="left:35px"><svg viewBox="0 0 10 10"><path d="M1.800 5.200l2.200 2.800L8.300 1.800" fill="none" stroke="#111" stroke-width="1.600"/></svg></div><div class="rs" style="left:49.8px"><svg viewBox="0 0 10 10"><path d="M2 2l6 6M8 2l-6 6" fill="none" stroke="#e8501c" stroke-width="1.400"/></svg></div><span class="abs" style="left:68px;top:0">Проверки электропитания</span></div>
<div class="row" style="left:0;top:366.98px;width:316px"><div class="cb" style="left:50.6px"><svg viewBox="0 0 10 10"><path d="M1.800 5.200l2.200 2.800L8.300 1.800" fill="none" stroke="#111" stroke-width="1.600"/></svg></div><div class="rs" style="left:65.4px"><svg viewBox="0 0 10 10"><path d="M1.800 5.200l2.200 3L8.500 1.300" fill="none" stroke="#1f9a1f" stroke-width="1.600"/></svg></div><span class="abs" style="left:83.6px;top:0">Емкость источников питания</span></div>
<div class="row" style="left:0;top:381.59px;width:316px"><div class="cb" style="left:50.6px"><svg viewBox="0 0 10 10"><path d="M1.800 5.200l2.200 2.800L8.300 1.800" fill="none" stroke="#111" stroke-width="1.600"/></svg></div><div class="rs" style="left:65.4px"><svg viewBox="0 0 10 10"><path d="M1.800 5.200l2.200 3L8.500 1.300" fill="none" stroke="#1f9a1f" stroke-width="1.600"/></svg></div><span class="abs" style="left:83.6px;top:0">Токовая нагрузка РИП</span></div>
<div class="row" style="left:0;top:396.21px;width:316px"><div class="cb" style="left:50.6px"><svg viewBox="0 0 10 10"><path d="M1.800 5.200l2.200 2.800L8.300 1.800" fill="none" stroke="#111" stroke-width="1.600"/></svg></div><div class="rs" style="left:65.4px"><svg viewBox="0 0 10 10"><path d="M2 2l6 6M8 2l-6 6" fill="none" stroke="#e8501c" stroke-width="1.400"/></svg></div><span class="abs" style="left:83.6px;top:0">Токовая нагрузка на шлейфах</span></div>
<div class="row" style="left:0;top:410.82px;width:316px"><div class="cb" style="left:50.6px"><svg viewBox="0 0 10 10"><path d="M1.800 5.200l2.200 2.800L8.300 1.800" fill="none" stroke="#111" stroke-width="1.600"/></svg></div><div class="rs" style="left:65.4px"><svg viewBox="0 0 10 10"><path d="M2 2l6 6M8 2l-6 6" fill="none" stroke="#e8501c" stroke-width="1.400"/></svg></div><span class="abs" style="left:83.6px;top:0">Подключение электропитания к приборам и устройствам</span></div>
<div class="row" style="left:0;top:425.43px;width:316px"><div class="cb" style="left:50.6px"><svg viewBox="0 0 10 10"><path d="M1.800 5.200l2.200 2.800L8.300 1.800" fill="none" stroke="#111" stroke-width="1.600"/></svg></div><div class="rs" style="left:65.4px"><svg viewBox="0 0 10 10"><path d="M1.800 5.200l2.200 3L8.500 1.300" fill="none" stroke="#1f9a1f" stroke-width="1.600"/></svg></div><span class="abs" style="left:83.6px;top:0">Проверка PoE</span></div>
<div class="row" style="left:0;top:440.05px;width:316px"><div class="cb" style="left:50.6px"><svg viewBox="0 0 10 10"><path d="M1.800 5.200l2.200 2.800L8.300 1.800" fill="none" stroke="#111" stroke-width="1.600"/></svg></div><div class="rs" style="left:65.4px"><svg viewBox="0 0 10 10"><path d="M1.800 5.200l2.200 3L8.500 1.300" fill="none" stroke="#1f9a1f" stroke-width="1.600"/></svg></div><span class="abs" style="left:83.6px;top:0">Наличие АКБ</span></div>
<div class="row" style="left:0;top:454.66px;width:316px"><div class="cb" style="left:35px"><svg viewBox="0 0 10 10"><path d="M1.800 5.200l2.200 2.800L8.300 1.800" fill="none" stroke="#111" stroke-width="1.600"/></svg></div><div class="rs" style="left:49.8px"><svg viewBox="0 0 10 10"><path d="M1.800 5.200l2.200 3L8.500 1.300" fill="none" stroke="#1f9a1f" stroke-width="1.600"/></svg></div><span class="abs" style="left:68px;top:0">Координаты объектов</span></div>
<div class="row" style="left:0;top:469.28px;width:316px"><div class="cb" style="left:35px"><svg viewBox="0 0 10 10"><path d="M1.800 5.200l2.200 2.800L8.300 1.800" fill="none" stroke="#111" stroke-width="1.600"/></svg></div><div class="rs" style="left:49.8px"><svg viewBox="0 0 10 10"><path d="M1.800 5.200l2.200 3L8.500 1.300" fill="none" stroke="#1f9a1f" stroke-width="1.600"/></svg></div><span class="abs" style="left:68px;top:0">Проверка линейных извещателей</span></div>
<div class="row" style="left:0;top:483.89px;width:316px"><div class="cb" style="left:35px"><svg viewBox="0 0 10 10"><path d="M1.800 5.200l2.200 2.800L8.300 1.800" fill="none" stroke="#111" stroke-width="1.600"/></svg></div><div class="rs" style="left:49.8px"><svg viewBox="0 0 10 10"><path d="M2 2l6 6M8 2l-6 6" fill="none" stroke="#e8501c" stroke-width="1.400"/></svg></div><span class="abs" style="left:68px;top:0">Заполнение адресных шлейфов</span></div>
<div class="row" style="left:0;top:498.51px;width:316px"><div class="tri" style="left:5.9px"></div><div class="cb" style="left:19.4px"><svg viewBox="0 0 10 10"><path d="M1.800 5.200l2.200 2.800L8.300 1.800" fill="none" stroke="#111" stroke-width="1.600"/></svg></div><div class="rs" style="left:34.2px"><svg viewBox="0 0 10 10"><path d="M2 2l6 6M8 2l-6 6" fill="none" stroke="#e8501c" stroke-width="1.400"/></svg></div><span class="abs" style="left:52.4px;top:0">Проверки помещений</span></div>
<div class="row" style="left:0;top:513.12px;width:316px"><div class="cb" style="left:35px"><svg viewBox="0 0 10 10"><path d="M1.800 5.200l2.200 2.800L8.300 1.800" fill="none" stroke="#111" stroke-width="1.600"/></svg></div><div class="rs" style="left:49.8px"><svg viewBox="0 0 10 10"><path d="M2 2l6 6M8 2l-6 6" fill="none" stroke="#e8501c" stroke-width="1.400"/></svg></div><span class="abs" style="left:68px;top:0">Принадлежность оборудования к помещениям</span></div>
<div class="row" style="left:0;top:527.74px;width:316px"><div class="cb" style="left:35px"><svg viewBox="0 0 10 10"><path d="M1.800 5.200l2.200 2.800L8.300 1.800" fill="none" stroke="#111" stroke-width="1.600"/></svg></div><div class="rs" style="left:49.8px"><svg viewBox="0 0 10 10"><path d="M1.800 5.200l2.200 3L8.500 1.300" fill="none" stroke="#1f9a1f" stroke-width="1.600"/></svg></div><span class="abs" style="left:68px;top:0">Соответствие номеров этажей и зданий</span></div>
<div class="row" style="left:0;top:542.36px;width:316px"><div class="cb" style="left:35px"><svg viewBox="0 0 10 10"><path d="M1.800 5.200l2.200 2.800L8.300 1.800" fill="none" stroke="#111" stroke-width="1.600"/></svg></div><div class="rs" style="left:49.8px"><svg viewBox="0 0 10 10"><path d="M1.800 5.200l2.200 3L8.500 1.300" fill="none" stroke="#1f9a1f" stroke-width="1.600"/></svg></div><span class="abs" style="left:68px;top:0">Принадлежность помещений к этажам</span></div>
<div class="row" style="left:0;top:556.97px;width:316px"><div class="cb" style="left:35px"><svg viewBox="0 0 10 10"><path d="M1.800 5.200l2.200 2.800L8.300 1.800" fill="none" stroke="#111" stroke-width="1.600"/></svg></div><div class="rs" style="left:49.8px"><svg viewBox="0 0 10 10"><path d="M1.800 5.200l2.200 3L8.500 1.300" fill="none" stroke="#1f9a1f" stroke-width="1.600"/></svg></div><span class="abs" style="left:68px;top:0">Уникальность обозначений помещений</span></div>
<div class="row" style="left:0;top:571.59px;width:316px"><div class="cb" style="left:35px"><svg viewBox="0 0 10 10"><path d="M1.800 5.200l2.200 2.800L8.300 1.800" fill="none" stroke="#111" stroke-width="1.600"/></svg></div><div class="rs" style="left:49.8px"><svg viewBox="0 0 10 10"><path d="M1.800 5.200l2.200 3L8.500 1.300" fill="none" stroke="#1f9a1f" stroke-width="1.600"/></svg></div><span class="abs" style="left:68px;top:0">Высотные отметки этажей</span></div>
<div class="row" style="left:0;top:586.2px;width:316px"><div class="cb" style="left:19.4px"></div><div class="rs" style="left:34.2px"></div><span class="abs" style="left:52.4px;top:0"></span></div>
<div class="abs" style="left:316px;top:0;width:13.500px;height:590px;background:#f0f0f0"></div>
<div class="abs" style="left:316px;top:14px;width:13.500px;height:470px;background:#cdcdcd"></div>
<svg class="abs" style="left:318.500px;top:4px" width="8" height="6"><path d="M.8 4.800l3.200-3.300 3.200 3.300" fill="none" stroke="#a0a0a0" stroke-width="1"/></svg>
<svg class="abs" style="left:318.500px;top:580px" width="8" height="6"><path d="M.8 1.200l3.200 3.300 3.200-3.300" fill="none" stroke="#a0a0a0" stroke-width="1"/></svg>
<div class="abs" style="left:0;top:589.500px;width:329.500px;height:13.500px;background:#f0f0f0"></div>
<div class="abs" style="left:14px;top:589.500px;width:251px;height:13.500px;background:#cdcdcd"></div>
<svg class="abs" style="left:4px;top:592.500px" width="6" height="8"><path d="M4.800 .8L1.500 4l3.300 3.200" fill="none" stroke="#a0a0a0" stroke-width="1"/></svg>
<svg class="abs" style="left:305px;top:592.500px" width="6" height="8"><path d="M1.200 .8L4.500 4 1.200 7.200" fill="none" stroke="#a0a0a0" stroke-width="1"/></svg>
</div>
<div class="abs" style="left:333.5px;top:24px;width:514px;height:115px;border:1px solid #b9bcc0;border-right:none;background:#fff;overflow:hidden">
<div class="abs" style="left:0;top:-0.5px;width:514px;height:14.5px;background:#e4e4e4"></div><div class="tri" style="left:4.500px;top:3.5px;border-left-width:4px;border-bottom-width:4px"></div><div class="t" style="left:15.500px;top:0.3px;font-weight:bold;font-size:9.600px;color:#111;line-height:14.5px">Параметры</div>
<div class="t" style="left:15.500px;top:14.8px;font-size:9.700px;color:#222;line-height:18.3px">Описание проверки</div><div class="t" style="left:191.500px;top:14.8px;font-size:9.700px;color:#a2a2a2;line-height:18.3px">Покрытие зон извещателями</div><div class="abs" style="left:0;top:31.8px;width:514px;height:1px;background:#f0f0f0"></div>
<div class="abs" style="left:0;top:32.3px;width:514px;height:14.5px;background:#e4e4e4"></div><div class="tri" style="left:4.500px;top:36.3px;border-left-width:4px;border-bottom-width:4px"></div><div class="t" style="left:15.500px;top:33.1px;font-weight:bold;font-size:9.600px;color:#111;line-height:14.5px">Результаты</div>
<div class="t" style="left:15.500px;top:47.6px;font-size:9.700px;color:#222;line-height:18.3px">Кол-во не прошедших проверку об...</div><div class="t" style="left:191.500px;top:47.6px;font-size:9.700px;color:#a2a2a2;line-height:18.3px">96</div><div class="abs" style="left:0;top:64.6px;width:514px;height:1px;background:#f0f0f0"></div>
<div class="t" style="left:15.500px;top:65.9px;font-size:9.700px;color:#222;line-height:18.3px">Кол-во ошибок</div><div class="t" style="left:191.500px;top:65.9px;font-size:9.700px;color:#a2a2a2;line-height:18.3px">96</div><div class="abs" style="left:0;top:82.9px;width:514px;height:1px;background:#f0f0f0"></div>
<div class="t" style="left:15.500px;top:84.2px;font-size:9.700px;color:#222;line-height:18.3px">Кол-во прошедших проверку объек...</div><div class="t" style="left:191.500px;top:84.2px;font-size:9.700px;color:#a2a2a2;line-height:18.3px">42</div><div class="abs" style="left:0;top:101.2px;width:514px;height:1px;background:#f0f0f0"></div>
<div class="abs" style="left:186.500px;top:14.500px;width:1px;height:88px;background:#f0f0f0"></div>
</div>
<svg class="abs" style="left:341px;top:145px" width="100" height="16" viewBox="0 0 100 16"><g opacity=".55"><rect x="1" y="5" width="9" height="8" fill="#dfe4ee" stroke="#c4ccd8" stroke-width=".8"/><path d="M6 2h7v6H9V5H6z" fill="#f4ecc0" stroke="#d8cc90" stroke-width=".6"/>
<rect x="28" y="2" width="8" height="8" fill="#dfe4ee" stroke="#c4ccd8" stroke-width=".8"/><path d="M31 13V6h2.500l1.500 3 1.500-3H39v7h-2.500V9.500L35 12l-1.500-2.500V13z" fill="#b8bcc4"/>
<path d="M55 4c0-1.200 2.200-2 5-2s5 .8 5 2v8c0 1.200-2.200 2-5 2s-5-.8-5-2z" fill="#eceef2" stroke="#d0d4dc" stroke-width=".8"/><path d="M55 7c0 1.200 2.200 2 5 2s5-.8 5-2" fill="none" stroke="#d0d4dc" stroke-width=".8"/>
<path d="M83 13l8-9M91 13l-7-8" stroke="#b0b0b0" stroke-width="1.600"/><path d="M82 5l3-3 2 2M88 2.500l4 1.500 1 3" fill="none" stroke="#b0b0b0" stroke-width="1.600"/></g></svg>
<div class="abs" id="tbl" style="left:333.5px;top:165.5px;width:513.500px;height:462.500px;border:1px solid #9aa6b4;border-left-color:#6c737c;border-right:none;border-bottom-color:#c8ccd2;background:#fff;overflow:hidden">
<div class="abs" style="left:0;top:0;width:498px;height:18.500px;background:linear-gradient(#fff,#fff 45%,#eef2f8)"></div>
<div class="abs" style="left:375px;top:0;width:1px;height:18.500px;background:#e0e4ea"></div>
<div class="t" style="left:9px;top:3.500px;font-size:9.700px;color:#1a1a1a">Ошибка</div>
<div class="t" style="left:379.500px;top:3.500px;font-size:9.700px;color:#1a1a1a">План</div>
<div class="abs" style="left:4px;top:19px;width:1px;height:443px;background:#9a9a9a"></div>
<div class="abs" style="left:375px;top:19px;width:1.300px;height:443px;background:#333"></div>
<div class="abs" style="left:498px;top:19px;width:1px;height:443px;background:#333"></div>
<div class="t" style="left:7.500px;top:22.2px;font-size:9.600px;line-height:12px;color:#222">Помещение: '100' ЗКПС: '100' обнаружена незащищенная площадь помещения</div>
<div class="t" style="left:378.500px;top:22.2px;font-size:9.600px;line-height:12px;color:#222">План 1-ого этажа.dwg</div>
<div class="abs" style="left:4px;top:36.67px;width:495px;height:1.200px;background:#333"></div>
<div class="t" style="left:7.500px;top:40.87px;font-size:9.600px;line-height:12px;color:#222">Помещение: '100' ЗКПС: '100' обнаружена незащищенная площадь помещения</div>
<div class="t" style="left:378.500px;top:40.87px;font-size:9.600px;line-height:12px;color:#222">План 1-ого этажа.dwg</div>
<div class="abs" style="left:4px;top:55.34px;width:495px;height:1.200px;background:#333"></div>
<div class="t" style="left:7.500px;top:59.54px;font-size:9.600px;line-height:12px;color:#222">Помещение: '100' ЗКПС: '100' обнаружена незащищенная площадь помещения</div>
<div class="t" style="left:378.500px;top:59.54px;font-size:9.600px;line-height:12px;color:#222">План 1-ого этажа.dwg</div>
<div class="abs" style="left:4px;top:74.01px;width:495px;height:1.200px;background:#333"></div>
<div class="t" style="left:7.500px;top:78.21px;font-size:9.600px;line-height:12px;color:#222">Помещение: '101' ЗКПС: '101' обнаружена незащищенная площадь помещения</div>
<div class="t" style="left:378.500px;top:78.21px;font-size:9.600px;line-height:12px;color:#222">План 1-ого этажа.dwg</div>
<div class="abs" style="left:4px;top:92.68px;width:495px;height:1.200px;background:#333"></div>
<div class="t" style="left:7.500px;top:96.88px;font-size:9.600px;line-height:12px;color:#222">Помещение: '102' ЗКПС: '102' обнаружена незащищенная площадь помещения</div>
<div class="t" style="left:378.500px;top:96.88px;font-size:9.600px;line-height:12px;color:#222">План 1-ого этажа.dwg</div>
<div class="abs" style="left:4px;top:111.35px;width:495px;height:1.200px;background:#333"></div>
<div class="t" style="left:7.500px;top:115.55px;font-size:9.600px;line-height:12px;color:#222">Помещение: '103' ЗКПС: '103' обнаружена незащищенная площадь помещения</div>
<div class="t" style="left:378.500px;top:115.55px;font-size:9.600px;line-height:12px;color:#222">План 1-ого этажа.dwg</div>
<div class="abs" style="left:4px;top:130.02px;width:495px;height:1.200px;background:#333"></div>
<div class="t" style="left:7.500px;top:134.22px;font-size:9.600px;line-height:12px;color:#222">Помещение: '104' ЗКПС: '104' обнаружена незащищенная площадь помещения</div>
<div class="t" style="left:378.500px;top:134.22px;font-size:9.600px;line-height:12px;color:#222">План 1-ого этажа.dwg</div>
<div class="abs" style="left:4px;top:148.69px;width:495px;height:1.200px;background:#333"></div>
<div class="t" style="left:7.500px;top:152.89px;font-size:9.600px;line-height:12px;color:#222">Помещение: '105' ЗКПС: '105' обнаружена незащищенная площадь помещения</div>
<div class="t" style="left:378.500px;top:152.89px;font-size:9.600px;line-height:12px;color:#222">План 1-ого этажа.dwg</div>
<div class="abs" style="left:4px;top:167.36px;width:495px;height:1.200px;background:#333"></div>
<div class="t" style="left:7.500px;top:171.56px;font-size:9.600px;line-height:12px;color:#222">Помещение: '106' ЗКПС: '106' обнаружена незащищенная площадь помещения</div>
<div class="t" style="left:378.500px;top:171.56px;font-size:9.600px;line-height:12px;color:#222">План 1-ого этажа.dwg</div>
<div class="abs" style="left:4px;top:186.03px;width:495px;height:1.200px;background:#333"></div>
<div class="t" style="left:7.500px;top:190.23px;font-size:9.600px;line-height:12px;color:#222">Помещение: '107' ЗКПС: '107' обнаружена незащищенная площадь помещения</div>
<div class="t" style="left:378.500px;top:190.23px;font-size:9.600px;line-height:12px;color:#222">План 1-ого этажа.dwg</div>
<div class="abs" style="left:4px;top:204.7px;width:495px;height:1.200px;background:#333"></div>
<div class="t" style="left:7.500px;top:208.9px;font-size:9.600px;line-height:12px;color:#222">Помещение: '108' ЗКПС: '108' обнаружена незащищенная площадь помещения</div>
<div class="t" style="left:378.500px;top:208.9px;font-size:9.600px;line-height:12px;color:#222">План 1-ого этажа.dwg</div>
<div class="abs" style="left:4px;top:223.37px;width:495px;height:1.200px;background:#333"></div>
<div class="t" style="left:7.500px;top:227.57px;font-size:9.600px;line-height:12px;color:#222">Помещение: '109' ЗКПС: '109' обнаружена незащищенная площадь помещения</div>
<div class="t" style="left:378.500px;top:227.57px;font-size:9.600px;line-height:12px;color:#222">План 1-ого этажа.dwg</div>
<div class="abs" style="left:4px;top:242.04px;width:495px;height:1.200px;background:#333"></div>
<div class="t" style="left:7.500px;top:246.24px;font-size:9.600px;line-height:12px;color:#222">Помещение: '110' ЗКПС: '110' обнаружена незащищенная площадь помещения</div>
<div class="t" style="left:378.500px;top:246.24px;font-size:9.600px;line-height:12px;color:#222">План 1-ого этажа.dwg</div>
<div class="abs" style="left:4px;top:260.71px;width:495px;height:1.200px;background:#333"></div>
<div class="t" style="left:7.500px;top:264.91px;font-size:9.600px;line-height:12px;color:#222">Помещение: '111' ЗКПС: '111' обнаружена незащищенная площадь помещения</div>
<div class="t" style="left:378.500px;top:264.91px;font-size:9.600px;line-height:12px;color:#222">План 1-ого этажа.dwg</div>
<div class="abs" style="left:4px;top:279.38px;width:495px;height:1.200px;background:#333"></div>
<div class="t" style="left:7.500px;top:283.58px;font-size:9.600px;line-height:12px;color:#222">Помещение: '112' ЗКПС: '112' обнаружена незащищенная площадь помещения</div>
<div class="t" style="left:378.500px;top:283.58px;font-size:9.600px;line-height:12px;color:#222">План 1-ого этажа.dwg</div>
<div class="abs" style="left:4px;top:298.05px;width:495px;height:1.200px;background:#333"></div>
<div class="t" style="left:7.500px;top:302.25px;font-size:9.600px;line-height:12px;color:#222">Помещение: '113' ЗКПС: '113' обнаружена незащищенная площадь помещения</div>
<div class="t" style="left:378.500px;top:302.25px;font-size:9.600px;line-height:12px;color:#222">План 1-ого этажа.dwg</div>
<div class="abs" style="left:4px;top:316.72px;width:495px;height:1.200px;background:#333"></div>
<div class="t" style="left:7.500px;top:320.92px;font-size:9.600px;line-height:12px;color:#222">Помещение: '114' ЗКПС: '114' обнаружена незащищенная площадь помещения</div>
<div class="t" style="left:378.500px;top:320.92px;font-size:9.600px;line-height:12px;color:#222">План 1-ого этажа.dwg</div>
<div class="abs" style="left:4px;top:335.39px;width:495px;height:1.200px;background:#333"></div>
<div class="t" style="left:7.500px;top:339.59px;font-size:9.600px;line-height:12px;color:#222">Помещение: '115' ЗКПС: '115' обнаружена незащищенная площадь помещения</div>
<div class="t" style="left:378.500px;top:339.59px;font-size:9.600px;line-height:12px;color:#222">План 1-ого этажа.dwg</div>
<div class="abs" style="left:4px;top:354.06px;width:495px;height:1.200px;background:#333"></div>
<div class="t" style="left:7.500px;top:358.26px;font-size:9.600px;line-height:12px;color:#222">Помещение: '116' ЗКПС: '116' обнаружена незащищенная площадь помещения</div>
<div class="t" style="left:378.500px;top:358.26px;font-size:9.600px;line-height:12px;color:#222">План 1-ого этажа.dwg</div>
<div class="abs" style="left:4px;top:372.73px;width:495px;height:1.200px;background:#333"></div>
<div class="t" style="left:7.500px;top:376.93px;font-size:9.600px;line-height:12px;color:#222">Помещение: '117' ЗКПС: '117' обнаружена незащищенная площадь помещения</div>
<div class="t" style="left:378.500px;top:376.93px;font-size:9.600px;line-height:12px;color:#222">План 1-ого этажа.dwg</div>
<div class="abs" style="left:4px;top:391.4px;width:495px;height:1.200px;background:#333"></div>
<div class="t" style="left:7.500px;top:395.6px;font-size:9.600px;line-height:12px;color:#222">Помещение: '122' ЗКПС: '122' обнаружена незащищенная площадь помещения</div>
<div class="t" style="left:378.500px;top:395.6px;font-size:9.600px;line-height:12px;color:#222">План 1-ого этажа.dwg</div>
<div class="abs" style="left:4px;top:410.07px;width:495px;height:1.200px;background:#333"></div>
<div class="t" style="left:7.500px;top:414.27px;font-size:9.600px;line-height:12px;color:#222">Помещение: '123' ЗКПС: '123' обнаружена незащищенная площадь помещения</div>
<div class="t" style="left:378.500px;top:414.27px;font-size:9.600px;line-height:12px;color:#222">План 1-ого этажа.dwg</div>
<div class="abs" style="left:4px;top:428.74px;width:495px;height:1.200px;background:#333"></div>
<div class="t" style="left:7.500px;top:432.74px;font-size:9.600px;line-height:12.800px;color:#222">Помещение: '100' ЗКПС: '100-C' обнаружена незащищенная площадь<br>помещения</div>
<div class="t" style="left:378.500px;top:432.94px;font-size:9.600px;line-height:12px;color:#222">План 1-ого этажа.dwg</div>
<div class="abs" style="left:4px;top:460.74px;width:495px;height:1.200px;background:#333"></div>
<div class="abs" style="left:499px;top:19px;width:14px;height:443px;background:#f0f0f0"></div>
<div class="abs" style="left:499px;top:33px;width:14px;height:99px;background:#cdcdcd"></div>
<svg class="abs" style="left:502px;top:24px" width="8" height="6"><path d="M.8 4.800l3.200-3.300 3.200 3.300" fill="none" stroke="#a0a0a0" stroke-width="1"/></svg>
<svg class="abs" style="left:502px;top:452px" width="8" height="6"><path d="M.8 1.200l3.200 3.300 3.200-3.300" fill="none" stroke="#a0a0a0" stroke-width="1"/></svg>
</div>
<div class="abs" style="left:4px;top:635px;width:11.500px;height:11.500px;border:1px solid #7a7a7a;background:#fff"></div>
<div class="t" style="left:20px;top:635px;font-size:9.700px;color:#111">Запускать проверки автоматически</div>
<div class="abs" style="left:716px;top:632.5px;width:61px;height:16px;border:1px solid #adadad;background:#e1e1e1;font-size:9.700px;line-height:14.500px;text-align:center;color:#111">Запуск</div>
<div class="abs" style="left:782px;top:632.5px;width:61px;height:16px;border:1px solid #adadad;background:#e1e1e1;font-size:9.700px;line-height:14.500px;text-align:center;color:#111">Закрыть</div>
</div><!--dlg-->
<div id="laytabs">
<svg class="abs" style="left:3px;top:1px" width="14" height="13"><rect x=".5" y=".5" width="13" height="12" fill="#3a3a3a" stroke="#cfcfcf" stroke-width="1"/><rect x="1" y="3.500" width="12" height="3" fill="#5f8fd0"/><path d="M1 9.500h12" stroke="#cfcfcf" stroke-width="1"/></svg>
<div class="lt" style="left:31px;width:46px;background:#787878;border-color:#787878;color:#fff;text-shadow:0 0 .5px #fff">Модель</div>
<div class="lt" style="left:77px;width:21.6px">A4</div>
<div class="lt" style="left:98.6px;width:21.6px">A3</div>
<div class="lt" style="left:120.2px;width:21.6px">A2</div>
<div class="lt" style="left:141.8px;width:21.6px">A1</div>
<div class="lt" style="left:163.4px;width:21.6px">A0</div>
</div>
<div id="cmd">
<div class="abs" style="left:0;top:5px;width:1497px;height:20px;background:#5a5a5a;border-top:1px solid #6a6a6a"></div>
<div class="abs" style="left:0;top:25px;width:1497px;height:14px;background:#535353;border-top:1px solid #666"></div>
<div class="abs" style="left:0;top:5px;width:14px;height:34px;background:#6c6c6c"></div>
<svg class="abs" style="left:3px;top:10px" width="8" height="8"><path d="M1 1l6 6M7 1l-6 6" stroke="#fff" stroke-width="1.300"/></svg>
<svg class="abs" style="left:3.500px;top:27px" width="7" height="9"><path d="M2 1h3v3.500h1.500v1H.5v-1H2zM3.500 5.500V9" stroke="#eee" stroke-width="1" fill="#eee"/></svg>
<div class="t mono" style="left:16px;top:1px;font-size:9.500px;color:#d8d8d8;line-height:12px;clip-path:inset(6px 0 0 0)">Укажите рамкой:</div>
<div class="t mono" style="left:16px;top:12.500px;font-size:9.500px;color:#e0e0e0">CW_CHECK - Мастер проверок</div>
<div class="t mono" style="left:16px;top:26.300px;font-size:9.500px;color:#e0e0e0">Команда:</div>
</div>
<div id="status">
<div class="sb" style="left:2px;width:123px;text-align:left;letter-spacing:-.28px">48929.9835,13430.1208,0.000C</div>
<div class="abs" style="left:128px;top:1px;width:1px;height:18px;background:#3a3a3a"></div>
<div class="abs" style="left:164px;top:1px;width:1px;height:18px;background:#3a3a3a"></div>
<div class="sb" style="left:133px;width:30px">ШАГ</div>
<div class="sb" style="left:165px;width:38px">СЕТКА</div>
<div class="sb on" style="left:204px;width:64px">оПРИВЯЗКА</div>
<div class="sb on" style="left:268px;width:78px">3D оПРИВЯЗКА</div>
<div class="sb on" style="left:346px;width:68px">ОТС-ОБЪЕКТ</div>
<div class="sb on" style="left:414px;width:67px">ОТС-ПОЛЯР</div>
<div class="sb" style="left:483px;width:33px">ОРТО</div>
<div class="sb on" style="left:519px;width:62px">ДИН-ВВОД</div>
<div class="sb" style="left:583px;width:28px">ИЗО</div>
<div class="sb on" style="left:616px;width:29px">ВЕС</div>
<div class="sb on" style="left:645px;width:70px">ШТРИХОВКА</div>
<div class="sb" style="left:968px;width:40px;font-size:9.300px">МОДЕЛЬ</div>
<div class="sb" style="left:1247px;width:28px">М1:1</div>
<svg class="abs" style="left:1008px;top:0" width="489" height="19" viewBox="0 0 489 19">
<path d="M3 12a2 2 0 1 1 2-3M6 9a2 2 0 1 1 2-3" fill="none" stroke="#bbb" stroke-width="1"/><path d="M9.500 4.500v3M8 6h3" stroke="#bbb" stroke-width=".8"/>
<rect x="19.500" y="4" width="9" height="8" fill="#e6e6e6"/><path d="M21 12.500h6l-3 3z" fill="#e6e6e6"/>
<circle cx="111" cy="7" r="3" fill="#f8eeb0"/><rect x="109.500" y="10" width="3" height="3" fill="#ccc"/><path d="M116 5v9l2.500-2.500 2 3" stroke="#eee" stroke-width="1" fill="#222"/><rect x="106" y="2.500" width="16" height="14" fill="none" stroke="#777" stroke-width=".6"/>
<path d="M130 10a4 4 0 1 1 6 0c-1 1-1 2-1 3h-4c0-1 0-2-1-3z" fill="#f8e070"/><rect x="131" y="13.500" width="4" height="2.500" fill="#bbb"/>
<rect x="145.500" y="1.500" width="70" height="16" fill="#4d6185" stroke="#7d96c8" stroke-width="1"/><path d="M168.500 1.500v16M192.500 1.500v16" stroke="#7d96c8" stroke-width="1"/>
<circle cx="157" cy="9.500" r="5.500" fill="#8a2a3a"/><path d="M155.500 6v6l1.500-1.500 1.500 2.500" stroke="#ddd" stroke-width=".9" fill="#ddd"/>
<path d="M176 4v9l2.500-2.500 2 3.500" stroke="#fff" stroke-width="1" fill="#fff"/><rect x="181" y="10" width="6" height="5" fill="#ddd"/>
<path d="M198 4v11h12M198 4l-1.500 2.500M198 4l1.500 2.500M210 15l-2.500-1.500M210 15l-2.500 1.500" stroke="#ddd" stroke-width="1" fill="none"/><path d="M205 5l-2 4h2l-1.500 3" stroke="#9cc0ee" stroke-width="1" fill="none"/>
<g transform="translate(19)"><path d="M280 16c-2-2-3.500-4-4-6l1.200-.6 1.800 2V5.500h1.600V9h.4V4.500h1.600V9h.4V5h1.600v4.500h.4V6.500h1.500V12c0 2-1 3-1.500 4z" fill="#fff"/></g>
<g transform="translate(15.500)"><circle cx="309" cy="8" r="4" fill="#9cc0ee" stroke="#e8e8e8" stroke-width="1.200"/><path d="M312 11l4 4.500" stroke="#5f8fd0" stroke-width="2.200"/></g>
<g transform="translate(16)"><rect x="326.500" y="2.500" width="14" height="14" fill="#5f8fd0" stroke="#9cc0ee" stroke-width="1"/><circle cx="333" cy="9" r="3" fill="#c8dcf4" stroke="#fff" stroke-width="1"/><path d="M335.500 11.500l3 3" stroke="#fff" stroke-width="1.500"/></g>
<g transform="translate(16)"><rect x="350.500" y="3.500" width="11" height="9" fill="none" stroke="#9cc0ee" stroke-width="1.200"/><circle cx="360" cy="11.500" r="3" fill="#484848" stroke="#ddd" stroke-width="1"/><path d="M362 13.500l2.500 2.500" stroke="#ddd" stroke-width="1.300"/></g>
<g transform="translate(13.400)"><ellipse cx="382" cy="10" rx="6.500" ry="2.800" fill="none" stroke="#999" stroke-width="1"/><path d="M382 3v13" stroke="#999" stroke-width="1"/><ellipse cx="382" cy="10" rx="2.500" ry="5.500" fill="none" stroke="#999" stroke-width=".8"/></g>
<g transform="translate(14)"><path d="M401 9.500a4.500 4.500 0 0 1 8-2.500M410 9.500a4.500 4.500 0 0 1-8 2.500" fill="none" stroke="#7fd060" stroke-width="2"/><path d="M409.500 4v4h-4zM401.500 15v-4h4z" fill="#7fd060"/></g>
<g transform="translate(12.400)"><rect x="418.500" y="3.500" width="9" height="7" fill="none" stroke="#ddd" stroke-width="1.200"/><rect x="424" y="9" width="7" height="6" fill="#ddd"/><rect x="426" y="7.500" width="3" height="2" fill="none" stroke="#ddd" stroke-width=".8"/></g>
<g transform="translate(8.700)"><path d="M442 3.500h4M442 3.500v4M452 3.500h-4M452 3.500v4M442 14h4M442 14v-4" stroke="#eee" stroke-width="1.400" fill="none"/><rect x="448" y="8.500" width="6" height="8" fill="#e03020"/><rect x="450.300" y="10" width="1.400" height="3.500" fill="#fff"/><rect x="450.300" y="14.200" width="1.400" height="1.300" fill="#fff"/></g>
<g transform="translate(6.800)"><rect x="468" y="5.500" width="9" height="8" fill="#4aa8e8" stroke="#c8e4f8" stroke-width="1"/><path d="M466 6V3h3M479.500 6V3h-3M466 13v3h3M479.500 13v3h-3" stroke="#4aa8e8" stroke-width="1.200" fill="none"/></g>
</svg>
</div>
</div><!--app-->
</body></html>
